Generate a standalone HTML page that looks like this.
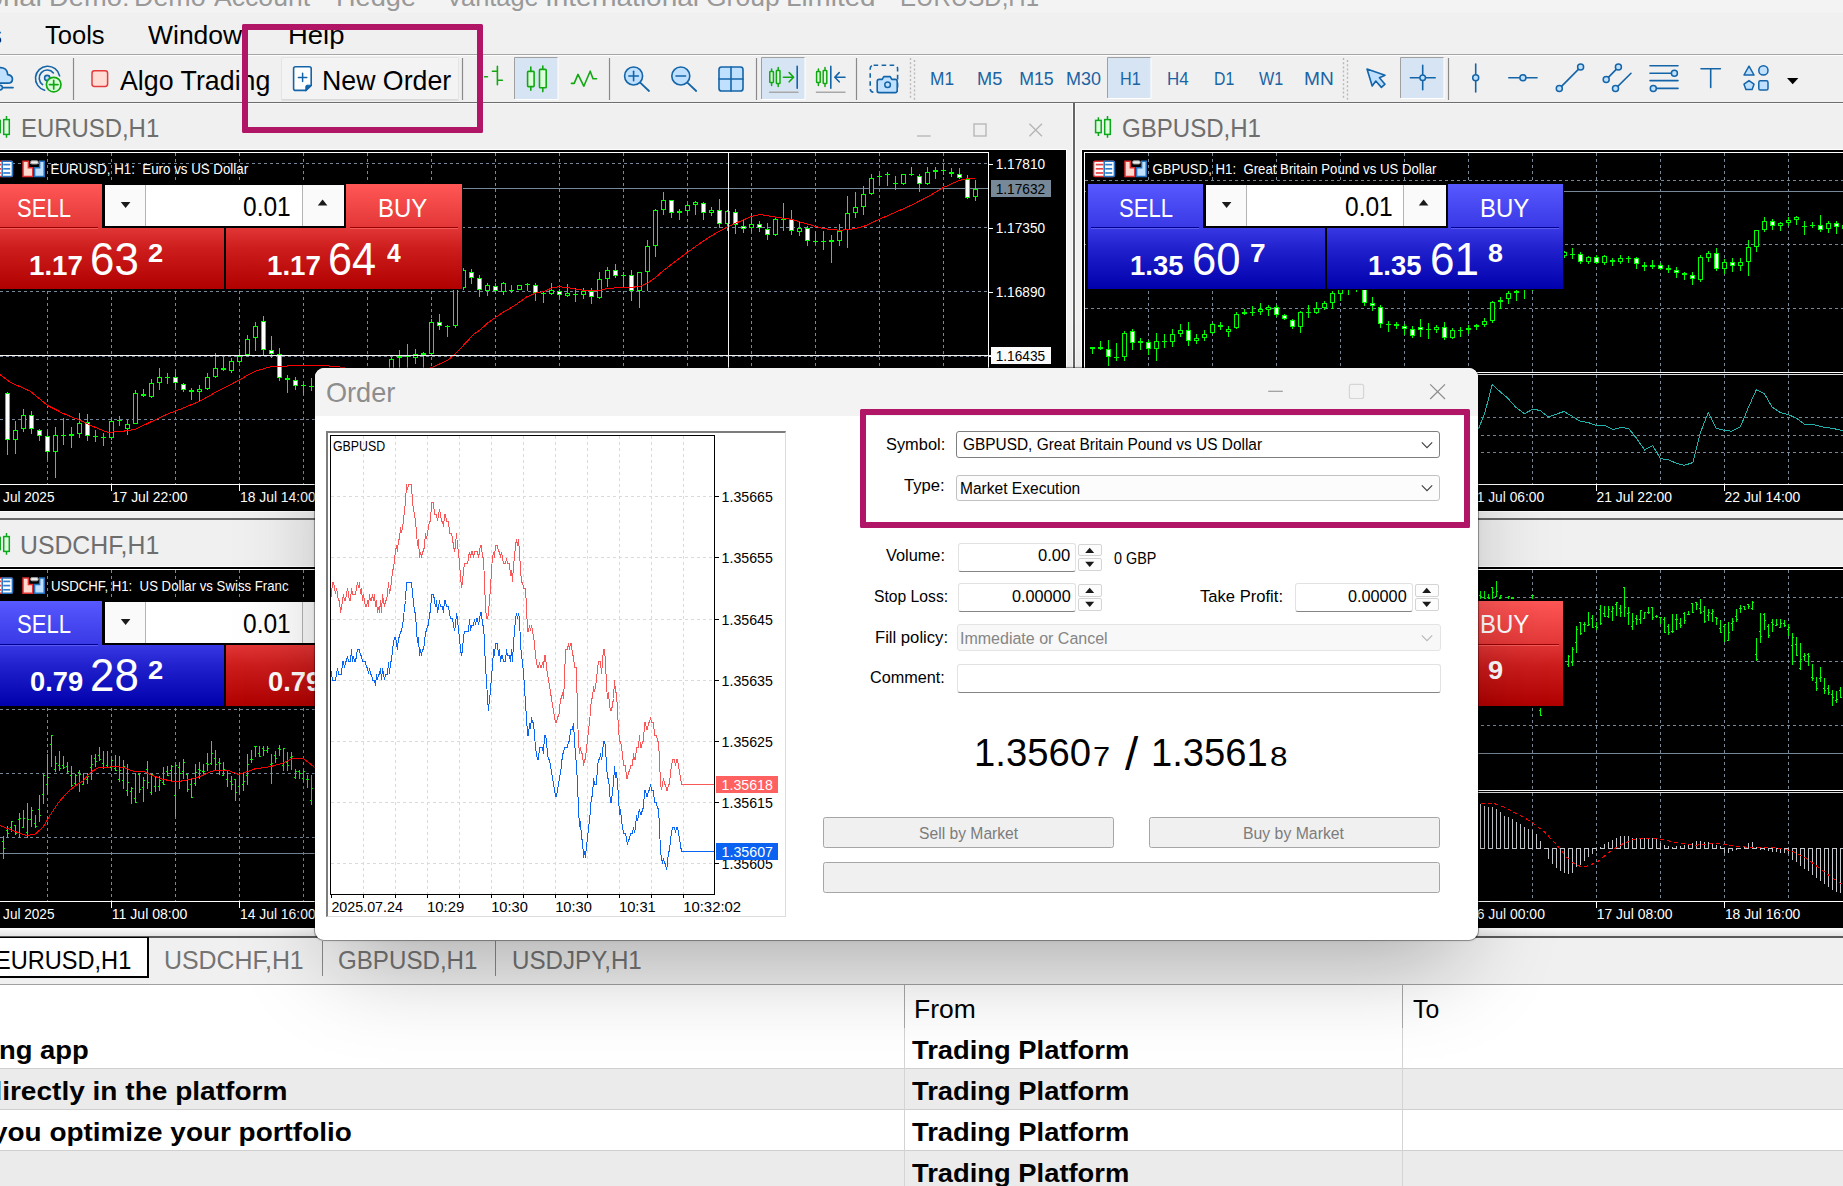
<!DOCTYPE html><html lang="en"><head><meta charset="utf-8"><title>Order - GBPUSD</title><style>
html,body{margin:0;padding:0;overflow:hidden;background:#f0f0f0}
body{width:1843px;height:1186px;position:relative}
.screen{position:absolute;left:0;top:0;width:1843px;height:1186px;overflow:hidden;background:#f0f0f0;font-family:"Liberation Sans",sans-serif;color:#000}
.t{position:absolute;white-space:pre;transform-origin:0 0;display:block}
.chart{position:absolute;display:block;overflow:hidden}
.chart text{font-family:"Liberation Sans",sans-serif}
div{box-sizing:border-box}
.abs{position:absolute}
.hl{position:absolute;border:6px solid #b11565;border-radius:1.5px;box-sizing:border-box}
</style></head><body><div class="screen"><header><div style="position:absolute;left:0px;top:0px;width:1843px;height:13px;background:#f3f3f3"></div><div class="abs" style="left:0;top:0;width:1843px;height:13px"><span class="t" style="left:-10.84px;top:-16.00px;font-size:26.40px;line-height:26.40px;color:#999;transform:scaleX(0.9299);">o</span><span class="t" style="left:2.63px;top:-16.00px;font-size:26.40px;line-height:26.40px;color:#999;transform:scaleX(1.1048);">nal</span><span class="t" style="left:48.54px;top:-16.00px;font-size:26.40px;line-height:26.40px;color:#999;transform:scaleX(1.0356);">Demo:</span><span class="t" style="left:133.98px;top:-16.00px;font-size:26.40px;line-height:26.40px;color:#999;transform:scaleX(1.0180);">Demo</span><span class="t" style="left:214.23px;top:-16.00px;font-size:26.40px;line-height:26.40px;color:#999;transform:scaleX(1.0083);">Account</span><span class="t" style="left:319.55px;top:-16.00px;font-size:26.40px;line-height:26.40px;color:#999;transform:scaleX(1.0513);">-</span><span class="t" style="left:335.76px;top:-16.00px;font-size:26.40px;line-height:26.40px;color:#999;transform:scaleX(1.0289);">Hedge</span><span class="t" style="left:423.55px;top:-16.00px;font-size:26.40px;line-height:26.40px;color:#999;transform:scaleX(1.0513);">-</span><span class="t" style="left:446.17px;top:-16.00px;font-size:26.40px;line-height:26.40px;color:#999;transform:scaleX(0.9610);">Vantage</span><span class="t" style="left:545.11px;top:-16.00px;font-size:26.40px;line-height:26.40px;color:#999;transform:scaleX(1.0602);">International</span><span class="t" style="left:705.68px;top:-16.00px;font-size:26.40px;line-height:26.40px;color:#999;transform:scaleX(1.0035);">Group</span><span class="t" style="left:785.81px;top:-16.00px;font-size:26.40px;line-height:26.40px;color:#999;transform:scaleX(1.0524);">Limited</span><span class="t" style="left:882.55px;top:-16.00px;font-size:26.40px;line-height:26.40px;color:#999;transform:scaleX(1.0513);">-</span><span class="t" style="left:900.11px;top:-16.00px;font-size:26.40px;line-height:26.40px;color:#999;transform:scaleX(0.9122);">EURUSD,H1</span></div><nav><span class="t" style="left:-11.33px;top:22.00px;font-size:26.40px;line-height:26.40px;color:#000;">s</span><span class="t" style="left:44.83px;top:22.00px;font-size:26.40px;line-height:26.40px;color:#000;transform:scaleX(0.9680);">Tools</span><span class="t" style="left:147.87px;top:22.00px;font-size:26.40px;line-height:26.40px;color:#000;transform:scaleX(1.0037);">Window</span><span class="t" style="left:287.63px;top:22.00px;font-size:26.40px;line-height:26.40px;color:#000;transform:scaleX(1.0408);">Help</span></nav><div style="position:absolute;left:0px;top:54px;width:1843px;height:1px;background:#a6a6a6"></div><div style="position:absolute;left:0px;top:55px;width:1843px;height:1px;background:#fdfdfd"></div><div style="position:absolute;left:0px;top:102px;width:1843px;height:1px;background:#6e6e6e"></div><div style="position:absolute;left:0px;top:103px;width:1843px;height:1px;background:#f8f8f8"></div><svg class="chart" style="left:0;top:54px" width="1843" height="50" viewBox="0 54 1843 50" fill="none" stroke-linecap="round" stroke-linejoin="round"><path d="M-6 83.2c-4 0-6-3-5.5-6 .5-3 3-4.5 5.5-4 1-4 5-6.5 9-5.2 3 1 4.6 3.6 4.6 6.6 3.4.4 5 2.6 4.8 5-.2 2.2-2 3.6-4.4 3.6z" fill="#bfe0ff" stroke="#1464a8" stroke-width="1.7"/><path d="M-2 87.6H13" stroke="#1464a8" stroke-width="1.7"/><circle cx="0" cy="87.6" r="2.4" fill="#bfe0ff" stroke="#1464a8" stroke-width="1.5"/><circle cx="47.2" cy="78" r="2.6" fill="#bfe0ff" stroke="#1464a8" stroke-width="1.6"/><path d="M42.6 84.6A8 8 0 1 1 53.4 73" stroke="#1464a8" stroke-width="1.6"/><path d="M44.6 90.2A12.2 12.2 0 1 1 59.6 75.8" stroke="#1464a8" stroke-width="1.6"/><circle cx="53.7" cy="84.6" r="7.3" fill="#dcffdc" stroke="#12a812" stroke-width="1.7"/><path d="M49.4 84.6h8.6M53.7 80.3v8.6" stroke="#12a812" stroke-width="1.7"/><path d="M73.5 58V100" stroke="#8a8a8a" stroke-width="1.2" stroke-linecap="butt"/><path d="M462.5 58V100" stroke="#8a8a8a" stroke-width="1.2" stroke-linecap="butt"/><path d="M609.5 58V100" stroke="#8a8a8a" stroke-width="1.2" stroke-linecap="butt"/><path d="M756.5 58V100" stroke="#8a8a8a" stroke-width="1.2" stroke-linecap="butt"/><path d="M856.5 58V100" stroke="#8a8a8a" stroke-width="1.2" stroke-linecap="butt"/><path d="M1448.5 58V100" stroke="#8a8a8a" stroke-width="1.2" stroke-linecap="butt"/><rect x="92" y="70.8" width="15.6" height="15.6" rx="2.4" fill="#ffdcd4" stroke="#e23c3c" stroke-width="1.5"/><rect x="281.5" y="57.5" width="177" height="42" rx="1" fill="#f3f3f3" stroke="#e4e4e4" stroke-width="1"/><path d="M282 100H458" stroke="#d0d0d0" stroke-width="1"/><path d="M295.6 66.8h13.6a2 2 0 0 1 2 2v16.6l-5.4 5h-10.2a2 2 0 0 1-2-2v-19.6a2 2 0 0 1 2-2z" fill="#fff" stroke="#1464a8" stroke-width="1.6"/><path d="M311.6 85.2h-4.4a1.4 1.4 0 0 0-1.4 1.4v4.2z" fill="#1464a8" stroke="#1464a8" stroke-width="1"/><path d="M298.4 77.4h8.4M302.6 73.2v8.4" stroke="#1464a8" stroke-width="1.5"/><path d="M497.4 66.4V84.8M492.4 71.2h5M497.4 80.2h5M484.5 76.8h3" stroke="#12a812" stroke-width="1.6"/><rect x="514.5" y="57.5" width="43.5" height="42" fill="#d6e4f4" stroke="none"/><path d="M514.5 99.5V57.5H558" stroke="#a0a0a0" stroke-width="1"/><path d="M558 57.5V99.5H514.5" stroke="#fff" stroke-width="1"/><path d="M530.8 67v4.2M530.8 86.6v3.6M542.8 66v3.2M542.8 87.8v3.8" stroke="#12a812" stroke-width="1.6"/><rect x="527.6" y="71.4" width="6.5" height="15.2" rx=".8" fill="#dcffdc" stroke="#12a812" stroke-width="1.6"/><rect x="539.5" y="69.4" width="6.7" height="18.4" rx=".8" fill="#dcffdc" stroke="#12a812" stroke-width="1.6"/><path d="M571.4 83.4h2.8l3.8-9 5.8 11.8 6.4-15 2.8 7.6h3.6" stroke="#12a812" stroke-width="1.6"/><circle cx="633.6" cy="76" r="9" fill="#bfe0ff" stroke="#1464a8" stroke-width="1.6"/><path d="M640.2 82.6L649.0 91" stroke="#1464a8" stroke-width="1.8"/><path d="M628.8000000000001 76h9.6" stroke="#1464a8" stroke-width="1.6"/><path d="M633.6 71.2v9.6" stroke="#1464a8" stroke-width="1.6"/><circle cx="680.8" cy="76" r="9" fill="#bfe0ff" stroke="#1464a8" stroke-width="1.6"/><path d="M687.4 82.6L696.1999999999999 91" stroke="#1464a8" stroke-width="1.8"/><path d="M676.0 76h9.6" stroke="#1464a8" stroke-width="1.6"/><rect x="719" y="67" width="24" height="24" rx="2.6" fill="#bfe0ff" stroke="#1464a8" stroke-width="1.6"/><path d="M731 67v24M719 79h24" stroke="#1464a8" stroke-width="1.6"/><rect x="761.5" y="57.5" width="43.5" height="42" fill="#d6e4f4"/><path d="M761.5 99.5V57.5H805" stroke="#a0a0a0" stroke-width="1"/><path d="M805 57.5V99.5H761.5" stroke="#fff" stroke-width="1"/><path d="M771.5999999999999 69v2.6M771.5999999999999 82.6v3M778.1999999999999 67.6v3M778.1999999999999 83.6v3" stroke="#12a812" stroke-width="1.5"/><rect x="769.8" y="71.6" width="3.6" height="11" rx=".6" fill="#dcffdc" stroke="#12a812" stroke-width="1.5"/><rect x="776.4" y="70.4" width="3.6" height="13.2" rx=".6" fill="#dcffdc" stroke="#12a812" stroke-width="1.5"/><path d="M783.4 77.2h10M789.2 72.6l4.4 4.6-4.4 4.6" stroke="#12a812" stroke-width="1.6"/><path d="M797.2 66.4V88.2" stroke="#1464a8" stroke-width="1.6"/><path d="M769.6 92.3H798" stroke="#a8a8a8" stroke-width="1.4"/><path d="M818.4 69v2.6M818.4 82.6v3M825.0 67.6v3M825.0 83.6v3" stroke="#12a812" stroke-width="1.5"/><rect x="816.6" y="71.6" width="3.6" height="11" rx=".6" fill="#dcffdc" stroke="#12a812" stroke-width="1.5"/><rect x="823.2" y="70.4" width="3.6" height="13.2" rx=".6" fill="#dcffdc" stroke="#12a812" stroke-width="1.5"/><path d="M830.8 66.4V88.2" stroke="#1464a8" stroke-width="1.6"/><path d="M845 77.2h-10M839.2 72.6l-4.4 4.6 4.4 4.6" stroke="#1464a8" stroke-width="1.6"/><path d="M816.4 92.3H845" stroke="#a8a8a8" stroke-width="1.4"/><rect x="870.2" y="65.2" width="27.4" height="27" rx="3.4" stroke="#1464a8" stroke-width="1.6" stroke-dasharray="4.6 3.4" stroke-linecap="butt"/><path d="M879.2 79.4h3l1.6-2.8h6.4l1.6 2.8h3.4a2 2 0 0 1 2 2v9.2a2 2 0 0 1-2 2h-16a2 2 0 0 1-2-2v-9.2a2 2 0 0 1 2-2z" fill="#bfe0ff" stroke="#1464a8" stroke-width="1.6"/><circle cx="887.6" cy="84.8" r="2.8" fill="#bfe0ff" stroke="#1464a8" stroke-width="1.5"/><path d="M910.5 58V100M914.5 60V100" stroke="#b8b8b8" stroke-width="1.4" stroke-dasharray="2 2.2" stroke-linecap="butt"/><path d="M1343.5 58V100M1347.5 60V100" stroke="#b8b8b8" stroke-width="1.4" stroke-dasharray="2 2.2" stroke-linecap="butt"/><rect x="1107.5" y="57.5" width="43.5" height="41" fill="#d6e4f4"/><path d="M1107.5 98.5V57.5H1151" stroke="#a0a0a0" stroke-width="1"/><path d="M1151 57.5V98.5H1107.5" stroke="#fff" stroke-width="1"/><path d="M1367 69l5.2 17 3.6-5 5.6 6.4 3.6-3.2-5.6-6.4 5.6-2.6z" fill="#bfe0ff" stroke="#1464a8" stroke-width="1.6"/><rect x="1400.5" y="57.5" width="43.5" height="41" fill="#d6e4f4"/><path d="M1400.5 98.5V57.5H1444" stroke="#a0a0a0" stroke-width="1"/><path d="M1444 57.5V98.5H1400.5" stroke="#fff" stroke-width="1"/><path d="M1410.4 77.7h24.8M1422.7 65.4v24.4" stroke="#1464a8" stroke-width="1.6"/><circle cx="1422.7" cy="77.7" r="2.8" fill="#bfe0ff" stroke="#1464a8" stroke-width="1.5"/><path d="M1475.7 64V92" stroke="#1464a8" stroke-width="1.6"/><circle cx="1475.7" cy="77.7" r="3" fill="#bfe0ff" stroke="#1464a8" stroke-width="1.5"/><path d="M1508.8 77.7H1537" stroke="#1464a8" stroke-width="1.6"/><circle cx="1522.9" cy="77.7" r="3" fill="#bfe0ff" stroke="#1464a8" stroke-width="1.5"/><path d="M1559.3 88.6L1580.6 67.1" stroke="#1464a8" stroke-width="1.6"/><circle cx="1559.3" cy="88.6" r="3" fill="#bfe0ff" stroke="#1464a8" stroke-width="1.5"/><circle cx="1580.6" cy="67.1" r="3" fill="#bfe0ff" stroke="#1464a8" stroke-width="1.5"/><path d="M1606.2 79.6L1618.4 67.1M1615.5 88.6L1631 73.3" stroke="#1464a8" stroke-width="1.6"/><circle cx="1606.2" cy="79.6" r="3" fill="#bfe0ff" stroke="#1464a8" stroke-width="1.5"/><circle cx="1618.4" cy="67.1" r="3" fill="#bfe0ff" stroke="#1464a8" stroke-width="1.5"/><circle cx="1615.5" cy="88.6" r="3" fill="#bfe0ff" stroke="#1464a8" stroke-width="1.5"/><path d="M1650 65.8H1678M1650 73.3H1672M1650 80.6H1678M1656 88.4H1678" stroke="#1464a8" stroke-width="1.6"/><circle cx="1674.4" cy="73.3" r="3" fill="#bfe0ff" stroke="#1464a8" stroke-width="1.5"/><circle cx="1653.3" cy="88.4" r="3" fill="#bfe0ff" stroke="#1464a8" stroke-width="1.5"/><path d="M1701 68.7H1720.4M1710.7 68.7V87.4" stroke="#1464a8" stroke-width="1.6"/><path d="M1749 66.2l5 8.8h-10z" fill="#bfe0ff" stroke="#1464a8" stroke-width="1.5"/><circle cx="1763.4" cy="70.4" r="4.6" fill="#bfe0ff" stroke="#1464a8" stroke-width="1.5"/><path d="M1749 80.6l5 3.6-1.9 5.4h-6.2l-1.9-5.4z" fill="#bfe0ff" stroke="#1464a8" stroke-width="1.5"/><rect x="1758.8" y="80.8" width="9.2" height="9.2" rx="1.6" fill="#bfe0ff" stroke="#1464a8" stroke-width="1.5"/><path d="M1787 78h11.4l-5.7 6.2z" fill="#000" stroke="none"/></svg><span class="t" style="left:120.33px;top:67.00px;font-size:27.40px;line-height:27.40px;color:#000;transform:scaleX(0.9778);">Algo Trading</span><span class="t" style="left:321.80px;top:67.00px;font-size:27.20px;line-height:27.20px;color:#000;transform:scaleX(0.9825);">New Order</span><span class="t" style="left:929.77px;top:71.00px;font-size:17.80px;line-height:17.80px;color:#1a64a4;transform:scaleX(0.9739);">M1</span><span class="t" style="left:976.50px;top:71.00px;font-size:17.80px;line-height:17.80px;color:#1a64a4;transform:scaleX(1.0215);">M5</span><span class="t" style="left:1019.13px;top:71.00px;font-size:17.80px;line-height:17.80px;color:#1a64a4;">M15</span><span class="t" style="left:1065.92px;top:71.00px;font-size:17.80px;line-height:17.80px;color:#1a64a4;transform:scaleX(1.0097);">M30</span><span class="t" style="left:1119.86px;top:71.00px;font-size:17.80px;line-height:17.80px;color:#1a64a4;transform:scaleX(0.9106);">H1</span><span class="t" style="left:1166.60px;top:71.00px;font-size:17.80px;line-height:17.80px;color:#1a64a4;transform:scaleX(0.9528);">H4</span><span class="t" style="left:1213.89px;top:71.00px;font-size:17.80px;line-height:17.80px;color:#1a64a4;transform:scaleX(0.8910);">D1</span><span class="t" style="left:1259.32px;top:71.00px;font-size:17.80px;line-height:17.80px;color:#1a64a4;transform:scaleX(0.9082);">W1</span><span class="t" style="left:1304.02px;top:71.00px;font-size:17.80px;line-height:17.80px;color:#1a64a4;transform:scaleX(1.0751);">MN</span></header><main><svg class="chart" style="left:-8px;top:115px" width="24" height="26" viewBox="-8 115 24 26" fill="#dfffdf" stroke="#0aa81a" stroke-width="1.5"><path d="M-2.6 117.2v3M-2.6 132.6v3.4M6.5 116v3.4M6.5 134.4v3.4" fill="none"/><rect x="-5.4" y="120.4" width="5.6" height="12.2"/><rect x="3.6999999999999993" y="119.6" width="5.6" height="14.8"/></svg><span class="t" style="left:21.23px;top:115.00px;font-size:26.40px;line-height:26.40px;color:#6e6e6e;transform:scaleX(0.9061);">EURUSD,H1</span><svg class="chart" style="left:910px;top:118px" width="140" height="24" viewBox="910 118 140 24" fill="none" stroke="#b4b4b4" stroke-width="1.3"><path d="M917 136h13.6"/><rect x="974" y="124" width="12" height="12"/><path d="M1029.4 123.8l12.6 12.4M1042 123.8l-12.6 12.4"/></svg><svg class="chart" style="left:1093px;top:115px" width="24" height="26" viewBox="1093 115 24 26" fill="#dfffdf" stroke="#0aa81a" stroke-width="1.5"><path d="M1098.4 117.2v3M1098.4 132.6v3.4M1107.5 116v3.4M1107.5 134.4v3.4" fill="none"/><rect x="1095.6" y="120.4" width="5.6" height="12.2"/><rect x="1104.7" y="119.6" width="5.6" height="14.8"/></svg><span class="t" style="left:1121.80px;top:115.00px;font-size:26.40px;line-height:26.40px;color:#6e6e6e;transform:scaleX(0.9110);">GBPUSD,H1</span><div style="position:absolute;left:1072px;top:103px;width:1px;height:408px;background:#fafafa"></div><div style="position:absolute;left:1073px;top:103px;width:2px;height:408px;background:#646464"></div><div style="position:absolute;left:1075px;top:103px;width:1px;height:408px;background:#fafafa"></div><div style="position:absolute;left:0px;top:149px;width:1067px;height:1px;background:#fff"></div><div style="position:absolute;left:1081px;top:149px;width:762px;height:1px;background:#fff"></div><div style="position:absolute;left:1066px;top:149px;width:1px;height:362px;background:#fff"></div><div style="position:absolute;left:1081px;top:149px;width:1px;height:362px;background:#fff"></div><div style="position:absolute;left:0px;top:511px;width:1843px;height:1px;background:#fbfbfb"></div><div style="position:absolute;left:0px;top:518px;width:1843px;height:2px;background:#6a6a6a"></div><svg class="chart" style="left:-8.5px;top:532.4px" width="24" height="26" viewBox="-8.5 532.4 24 26" fill="#dfffdf" stroke="#0aa81a" stroke-width="1.5"><path d="M-3.1 534.6v3M-3.1 550.0v3.4M6.0 533.4v3.4M6.0 551.8v3.4" fill="none"/><rect x="-5.9" y="537.8" width="5.6" height="12.2"/><rect x="3.1999999999999993" y="537.0" width="5.6" height="14.8"/></svg><span class="t" style="left:20.48px;top:532.00px;font-size:26.40px;line-height:26.40px;color:#6e6e6e;transform:scaleX(0.9399);">USDCHF,H1</span><div style="position:absolute;left:0px;top:566px;width:1843px;height:1px;background:#fff"></div><svg class="chart" style="left:0px;top:150px" width="1066" height="361" viewBox="0 150 1066 361" shape-rendering="crispEdges" ><rect x="0" y="150" width="1066" height="361" fill="#000"/><path d="M47.5 153V484M111.5 153V484M175.5 153V484M239.5 153V484M303.5 153V484M367.5 153V484M431.5 153V484M495.5 153V484M559.5 153V484M623.5 153V484M687.5 153V484M751.5 153V484M815.5 153V484M879.5 153V484M943.5 153V484M0 163.5H988M0 227.5H988M0 291.5H988M0 356.5H988M0 419.5H988" stroke="#778899" stroke-width="1" stroke-dasharray="3 3" fill="none"/><path d="M0 188.5H988" stroke="#778899" stroke-width="1"/><path d="M7 392h1v63h-1zM15 421h1v33h-1zM23 409h1v23h-1zM31 411h1v23h-1zM39 429h1v12h-1zM47 431h1v29h-1zM55 427h1v51h-1zM63 418h1v27h-1zM71 427h1v21h-1zM79 413h1v25h-1zM87 414h1v27h-1zM95 430h1v12h-1zM103 433h1v13h-1zM111 417h1v23h-1zM119 416h1v10h-1zM127 420h1v15h-1zM135 390h1v34h-1zM143 389h1v8h-1zM151 379h1v19h-1zM159 368h1v22h-1zM167 373h1v11h-1zM175 372h1v15h-1zM183 383h1v9h-1zM191 388h1v12h-1zM199 385h1v16h-1zM207 373h1v17h-1zM215 353h1v25h-1zM223 356h1v15h-1zM231 358h1v15h-1zM239 349h1v14h-1zM247 335h1v21h-1zM255 322h1v29h-1zM263 316h1v39h-1zM271 336h1v22h-1zM279 348h1v33h-1zM287 375h1v18h-1zM295 377h1v13h-1zM303 384h1v11h-1zM311 378h1v13h-1zM319 381h1v12h-1zM327 381h1v12h-1zM335 381h1v12h-1zM343 381h1v12h-1zM351 381h1v12h-1zM359 381h1v12h-1zM367 381h1v12h-1zM375 381h1v12h-1zM383 381h1v12h-1zM391 357h1v23h-1zM399 350h1v22h-1zM407 344h1v28h-1zM415 349h1v15h-1zM423 352h1v20h-1zM431 319h1v36h-1zM439 314h1v16h-1zM447 325h1v12h-1zM455 286h1v42h-1zM463 268h1v22h-1zM471 269h1v15h-1zM479 275h1v22h-1zM487 283h1v13h-1zM495 283h1v9h-1zM503 282h1v13h-1zM511 285h1v8h-1zM519 285h1v5h-1zM527 283h1v8h-1zM535 283h1v18h-1zM543 292h1v11h-1zM551 283h1v12h-1zM559 289h1v9h-1zM567 284h1v13h-1zM575 288h1v14h-1zM583 288h1v11h-1zM591 288h1v16h-1zM599 272h1v27h-1zM607 267h1v20h-1zM615 264h1v14h-1zM623 272h1v16h-1zM631 270h1v31h-1zM639 272h1v36h-1zM647 240h1v51h-1zM655 209h1v48h-1zM663 192h1v23h-1zM671 200h1v18h-1zM679 209h1v11h-1zM687 203h1v12h-1zM695 201h1v14h-1zM703 202h1v18h-1zM711 207h1v9h-1zM719 199h1v29h-1zM727 210h1v21h-1zM735 209h1v25h-1zM743 220h1v13h-1zM751 213h1v19h-1zM759 221h1v11h-1zM767 223h1v17h-1zM775 218h1v18h-1zM783 203h1v28h-1zM791 210h1v25h-1zM799 222h1v14h-1zM807 226h1v20h-1zM815 232h1v13h-1zM823 231h1v19h-1zM831 235h1v28h-1zM839 224h1v22h-1zM847 196h1v52h-1zM855 192h1v26h-1zM863 186h1v29h-1zM871 174h1v21h-1zM879 174h1v11h-1zM887 172h1v14h-1zM895 176h1v14h-1zM903 174h1v11h-1zM911 167h1v9h-1zM919 174h1v18h-1zM927 167h1v18h-1zM935 167h1v12h-1zM943 164h1v11h-1zM951 168h1v9h-1zM959 168h1v11h-1zM967 175h1v24h-1zM975 180h1v21h-1zM5 393h5v47h-5zM13 430h5v10h-5zM21 415h5v14h-5zM29 415h5v14h-5zM37 430h5v6h-5zM45 436h5v16h-5zM53 435h5v17h-5zM61 435h5v1h-5zM69 434h5v2h-5zM77 423h5v11h-5zM85 422h5v14h-5zM93 436h5v1h-5zM101 437h5v1h-5zM109 421h5v17h-5zM117 420h5v1h-5zM125 424h5v5h-5zM133 393h5v31h-5zM141 394h5v2h-5zM149 383h5v14h-5zM157 377h5v6h-5zM165 377h5v1h-5zM173 377h5v6h-5zM181 384h5v6h-5zM189 390h5v2h-5zM197 389h5v3h-5zM205 377h5v12h-5zM213 368h5v9h-5zM221 368h5v2h-5zM229 361h5v10h-5zM237 356h5v6h-5zM245 339h5v16h-5zM253 326h5v12h-5zM261 321h5v29h-5zM269 350h5v4h-5zM277 354h5v24h-5zM285 378h5v2h-5zM293 380h5v6h-5zM301 385h5v1h-5zM309 386h5v1h-5zM317 384h5v5h-5zM325 384h5v5h-5zM333 384h5v5h-5zM341 384h5v5h-5zM349 384h5v5h-5zM357 384h5v5h-5zM365 384h5v5h-5zM373 384h5v5h-5zM381 384h5v5h-5zM389 359h5v19h-5zM397 356h5v2h-5zM405 356h5v1h-5zM413 354h5v4h-5zM421 353h5v2h-5zM429 322h5v32h-5zM437 322h5v4h-5zM445 326h5v1h-5zM453 288h5v38h-5zM461 270h5v18h-5zM469 272h5v6h-5zM477 278h5v12h-5zM485 285h5v6h-5zM493 286h5v5h-5zM501 283h5v9h-5zM509 290h5v1h-5zM517 285h5v5h-5zM525 284h5v1h-5zM533 285h5v8h-5zM541 293h5v1h-5zM549 290h5v4h-5zM557 291h5v4h-5zM565 293h5v3h-5zM573 294h5v1h-5zM581 291h5v4h-5zM589 291h5v6h-5zM597 279h5v19h-5zM605 270h5v9h-5zM613 270h5v6h-5zM621 275h5v1h-5zM629 275h5v16h-5zM637 272h5v19h-5zM645 246h5v26h-5zM653 210h5v36h-5zM661 200h5v10h-5zM669 200h5v13h-5zM677 211h5v2h-5zM685 205h5v6h-5zM693 202h5v3h-5zM701 203h5v10h-5zM709 210h5v3h-5zM717 210h5v14h-5zM725 211h5v13h-5zM733 212h5v13h-5zM741 226h5v3h-5zM749 224h5v4h-5zM757 224h5v4h-5zM765 229h5v6h-5zM773 219h5v16h-5zM781 219h5v1h-5zM789 219h5v12h-5zM797 228h5v4h-5zM805 228h5v13h-5zM813 241h5v1h-5zM821 241h5v1h-5zM829 240h5v2h-5zM837 231h5v10h-5zM845 213h5v17h-5zM853 207h5v6h-5zM861 194h5v13h-5zM869 178h5v16h-5zM877 176h5v1h-5zM885 174h5v1h-5zM893 183h5v1h-5zM901 174h5v10h-5zM909 174h5v1h-5zM917 176h5v8h-5zM925 172h5v12h-5zM933 170h5v2h-5zM941 170h5v1h-5zM949 172h5v2h-5zM957 174h5v4h-5zM965 179h5v19h-5zM973 189h5v8h-5z" fill="#00ff00"/><path d="M14 431h3v8h-3zM22 416h3v12h-3zM54 436h3v15h-3zM78 424h3v9h-3zM110 422h3v15h-3zM126 425h3v3h-3zM134 394h3v29h-3zM150 384h3v12h-3zM158 378h3v4h-3zM198 390h3v1h-3zM206 378h3v10h-3zM214 369h3v7h-3zM230 362h3v8h-3zM238 357h3v4h-3zM246 340h3v14h-3zM254 327h3v10h-3zM318 385h3v3h-3zM326 385h3v3h-3zM334 385h3v3h-3zM342 385h3v3h-3zM350 385h3v3h-3zM358 385h3v3h-3zM366 385h3v3h-3zM374 385h3v3h-3zM382 385h3v3h-3zM390 360h3v17h-3zM414 355h3v2h-3zM430 323h3v30h-3zM454 289h3v36h-3zM462 271h3v16h-3zM486 286h3v4h-3zM502 284h3v7h-3zM518 286h3v3h-3zM550 291h3v2h-3zM566 294h3v1h-3zM582 292h3v2h-3zM598 280h3v17h-3zM606 271h3v7h-3zM638 273h3v17h-3zM646 247h3v24h-3zM654 211h3v34h-3zM662 201h3v8h-3zM686 206h3v4h-3zM694 203h3v1h-3zM710 211h3v1h-3zM726 212h3v11h-3zM750 225h3v2h-3zM774 220h3v14h-3zM798 229h3v2h-3zM838 232h3v8h-3zM846 214h3v15h-3zM854 208h3v4h-3zM862 195h3v11h-3zM870 179h3v14h-3zM902 175h3v8h-3zM926 173h3v10h-3zM974 190h3v6h-3z" fill="#000"/><path d="M6 394h3v45h-3zM30 416h3v12h-3zM38 431h3v4h-3zM46 437h3v14h-3zM86 423h3v12h-3zM174 378h3v4h-3zM182 385h3v4h-3zM262 322h3v27h-3zM270 351h3v2h-3zM278 355h3v22h-3zM294 381h3v4h-3zM438 323h3v2h-3zM470 273h3v4h-3zM478 279h3v10h-3zM494 287h3v3h-3zM534 286h3v6h-3zM558 292h3v2h-3zM590 292h3v4h-3zM614 271h3v4h-3zM630 276h3v14h-3zM670 201h3v11h-3zM702 204h3v8h-3zM718 211h3v12h-3zM734 213h3v11h-3zM742 227h3v1h-3zM758 225h3v2h-3zM766 230h3v4h-3zM790 220h3v10h-3zM806 229h3v11h-3zM918 177h3v6h-3zM958 175h3v2h-3zM966 180h3v17h-3z" fill="#fff"/><g shape-rendering="crispEdges"><polyline points="0,374.7 10.1,382.2 30.4,391.3 47.6,405.5 63.3,413.5 79.3,420 95.1,427.3 107.2,432.2 119.4,431.8 135.4,429.3 151.4,421.6 167.3,414.2 183.5,407.9 199.5,401.4 215.5,392.3 231.5,384.2 239.4,379.8 255.4,371.1 271.3,366.6 287.3,366 303.5,365.4 312,365.4" fill="none" stroke="#ff0000" stroke-width="1" /><polyline points="300,365.4 324,365.6 340,367 380,375 410,374 432,367.5 447,360.5 452,357 460,349 474,334 480,330 488.2,322.5 503.1,312.3 514.2,305.8 527.2,296.6 535.5,293.2 543.9,291.4 551.3,288.2 558.7,286.7 568,287.7 575.4,289.1 584.7,290.4 599.6,290.4 608.8,288.2 623.7,287.7 639.4,286.7 647.4,283.2 655.4,277.6 663.4,270.6 679.5,258.2 695.5,246.5 711.4,235.7 727.4,227 735.4,223.3 751.7,216.4 759.5,214.6 760,214.5 774.2,216.9 790.7,219.2 807.2,224 823.8,228.7 840.3,230.3 854.5,228.7 863.9,226.3 879.5,219.2 895.5,212.2 911.6,205.1 927.7,196.8 943.5,187.4 959.5,180.3 967.8,178.6 974.9,178.4" fill="none" stroke="#ff0000" stroke-width="1" /></g><path d="M0 355.5H992" stroke="#f4f4f4" stroke-width="1"/><path d="M728.5 153V484" stroke="#f4f4f4" stroke-width="1"/><path d="M0 152.5H989" stroke="#fff" stroke-width="1"/><path d="M988.5 152V511" stroke="#fff" stroke-width="1"/><path d="M0 484.5H989" stroke="#fff" stroke-width="1"/><path d="M989 164.5h4M989 228.5h4M989 292.5h4M989 356.5h4M989 420.5h4M111.5 485v6M239.5 485v6M367.5 485v6M495.5 485v6M623.5 485v6M751.5 485v6M879.5 485v6" stroke="#fff" stroke-width="1"/><rect x="991" y="180" width="60" height="17" fill="#778899"/><rect x="991" y="347" width="60" height="17" fill="#fff"/><g shape-rendering="auto"><text x="995.7" y="169.2" fill="#fff" font-size="14.2" textLength="49.4" lengthAdjust="spacingAndGlyphs" xml:space="preserve">1.17810</text><text x="995.7" y="233.2" fill="#fff" font-size="14.2" textLength="49.4" lengthAdjust="spacingAndGlyphs" xml:space="preserve">1.17350</text><text x="995.7" y="297.2" fill="#fff" font-size="14.2" textLength="49.4" lengthAdjust="spacingAndGlyphs" xml:space="preserve">1.16890</text><text x="995.7" y="194" fill="#000" font-size="14.2" textLength="49.5" lengthAdjust="spacingAndGlyphs" xml:space="preserve">1.17632</text><text x="995.7" y="361" fill="#000" font-size="14.2" textLength="49.4" lengthAdjust="spacingAndGlyphs" xml:space="preserve">1.16435</text><text x="3.1" y="502" fill="#fff" font-size="14.2" textLength="51.4" lengthAdjust="spacingAndGlyphs" xml:space="preserve">Jul 2025</text><text x="111.9" y="502" fill="#fff" font-size="14.2" textLength="75.6" lengthAdjust="spacingAndGlyphs" xml:space="preserve">17 Jul 22:00</text><text x="239.9" y="502" fill="#fff" font-size="14.2" textLength="75.8" lengthAdjust="spacingAndGlyphs" xml:space="preserve">18 Jul 14:00</text><text x="50.6" y="174.2" fill="#fff" font-size="14.2" textLength="197.5" lengthAdjust="spacingAndGlyphs" xml:space="preserve">EURUSD, H1:  Euro vs US Dollar</text><g shape-rendering="auto"><rect x="-8.4" y="161.20000000000002" width="20.8" height="15.2" rx="1.5" fill="#fff" stroke="#e03030" stroke-width="1.5"/><path d="M2.1999999999999993 161.20000000000002h9.2a1 1 0 0 1 1 1v13.2a1 1 0 0 1-1 1h-9.2z" fill="#fff" stroke="#2272c0" stroke-width="1.5"/><path d="M-6.2 164.60000000000002h7.4" stroke="#e84040" stroke-width="1.7"/><path d="M3.1999999999999993 164.60000000000002h7" stroke="#2f7fd0" stroke-width="1.7"/><path d="M-6.2 168.8h7.4" stroke="#e84040" stroke-width="1.7"/><path d="M3.1999999999999993 168.8h7" stroke="#2f7fd0" stroke-width="1.7"/><path d="M-6.2 173.00000000000003h7.4" stroke="#e84040" stroke-width="1.7"/><path d="M3.1999999999999993 173.00000000000003h7" stroke="#2f7fd0" stroke-width="1.7"/><path d="M23.0 161.20000000000002h5.4v6.6h4.4v8.6h-9.8z" fill="#ffd8d0" stroke="#e03030" stroke-width="1.5"/><path d="M34.6 176.4v-8.6h5v-6.6h4.6v15.2z" fill="#bfe0ff" stroke="#2272c0" stroke-width="1.5"/><rect x="30.6" y="160.8" width="7.6" height="3.2" rx="1.4" fill="#eee" stroke="#9a9a9a" stroke-width="1"/></g></g></svg><div class="abs" style="left:-13px;top:183.4px;width:475px;height:106px"><div class="abs" style="left:-2px;top:0;width:478px;height:106.6px;background:#000"></div><div class="abs" style="left:0px;top:1px;width:114.6px;height:43.6px;background:linear-gradient(#ff5656 0%,#e63a3a 38%,#cc1c1c 62%,#b00000 100%);background-size:100% 104.6px;background-position:0 0px;background-repeat:no-repeat"></div><div class="abs" style="left:0px;top:44.6px;width:236.6px;height:60.99999999999999px;background:linear-gradient(#ff5656 0%,#e63a3a 38%,#cc1c1c 62%,#b00000 100%);background-size:100% 104.6px;background-position:0 -43.6px;background-repeat:no-repeat"></div><div class="abs" style="left:359.4px;top:1px;width:115.6px;height:43.6px;background:linear-gradient(#ff5656 0%,#e63a3a 38%,#cc1c1c 62%,#b00000 100%);background-size:100% 104.6px;background-position:0 0px;background-repeat:no-repeat"></div><div class="abs" style="left:238.8px;top:44.6px;width:236.2px;height:60.99999999999999px;background:linear-gradient(#ff5656 0%,#e63a3a 38%,#cc1c1c 62%,#b00000 100%);background-size:100% 104.6px;background-position:0 -43.6px;background-repeat:no-repeat"></div><div class="abs" style="left:3px;top:43.6px;width:108px;height:1px;background:#9a0000"></div><div class="abs" style="left:3px;top:44.6px;width:108px;height:1px;background:#ff7a7a;opacity:.55"></div><div class="abs" style="left:363px;top:43.6px;width:108px;height:1px;background:#9a0000"></div><div class="abs" style="left:363px;top:44.6px;width:108px;height:1px;background:#ff7a7a;opacity:.55"></div><div class="abs" style="left:117.6px;top:1.4px;width:239.6px;height:41.2px;background:#fff"></div><div class="abs" style="left:117.6px;top:1.4px;width:41.2px;height:41.2px;background:#fafafa;border-right:1px solid #b4b4b4"></div><div class="abs" style="left:314.6px;top:1.4px;width:42.6px;height:41.2px;background:#fafafa;border-left:1px solid #b4b4b4"></div><svg class="chart" style="left:117px;top:1px" width="241" height="41" viewBox="117 0 241 41"><path d="M133.8 18h9.6l-4.8 6z" fill="#1a1a1a"/><path d="M330.8 21.6h9.6l-4.8-6z" fill="#1a1a1a"/></svg></div><span class="t" style="left:17.41px;top:195.00px;font-size:26.60px;line-height:26.60px;color:#fff;transform:scaleX(0.8289);">SELL</span><span class="t" style="left:378.42px;top:195.00px;font-size:26.60px;line-height:26.60px;color:#fff;transform:scaleX(0.9011);">BUY</span><span class="t" style="left:243.42px;top:193.00px;font-size:27.20px;line-height:27.20px;color:#000;transform:scaleX(0.9025);">0.01</span><span class="t" style="left:28.87px;top:252.00px;font-size:27.60px;line-height:27.60px;color:#fff;font-weight:700;transform:scaleX(1.0043);">1.17</span><span class="t" style="left:90.21px;top:236.00px;font-size:46.50px;line-height:46.50px;color:#fff;transform:scaleX(0.9426);">63</span><span class="t" style="left:148.44px;top:240.00px;font-size:26.50px;line-height:26.50px;color:#fff;font-weight:700;transform:scaleX(1.0324);">2</span><span class="t" style="left:266.87px;top:252.00px;font-size:27.60px;line-height:27.60px;color:#fff;font-weight:700;transform:scaleX(1.0043);">1.17</span><span class="t" style="left:328.24px;top:236.00px;font-size:46.50px;line-height:46.50px;color:#fff;transform:scaleX(0.9289);">64</span><span class="t" style="left:387.03px;top:240.00px;font-size:26.50px;line-height:26.50px;color:#fff;font-weight:700;transform:scaleX(0.9311);">4</span><svg class="chart" style="left:1082px;top:150px" width="761" height="361" viewBox="1082 150 761 361" shape-rendering="crispEdges" ><rect x="1082" y="150" width="761" height="361" fill="#000"/><path d="M1148.5 153V372M1212.5 153V372M1276.5 153V372M1340.5 153V372M1404.5 153V372M1468.5 153V372M1532.5 153V372M1596.5 153V372M1660.5 153V372M1724.5 153V372M1788.5 153V372M1085 180.5H1843M1085 244.5H1843M1085 308.5H1843" stroke="#778899" stroke-width="1" stroke-dasharray="3 3" fill="none"/><path d="M1148.5 375V484M1212.5 375V484M1276.5 375V484M1340.5 375V484M1404.5 375V484M1468.5 375V484M1532.5 375V484M1596.5 375V484M1660.5 375V484M1724.5 375V484M1788.5 375V484M1085 417.5H1843M1085 435.5H1843M1085 452.5H1843" stroke="#778899" stroke-width="1" stroke-dasharray="3 3" fill="none"/><path d="M1085 191.5H1843" stroke="#778899" stroke-width="1"/><path d="M1092 347h1v7h-1zM1100 341h1v9h-1zM1108 340h1v26h-1zM1116 343h1v18h-1zM1124 331h1v30h-1zM1132 329h1v21h-1zM1140 338h1v12h-1zM1148 340h1v15h-1zM1156 333h1v28h-1zM1164 334h1v14h-1zM1172 329h1v18h-1zM1180 324h1v13h-1zM1188 322h1v24h-1zM1196 334h1v10h-1zM1204 330h1v11h-1zM1212 323h1v11h-1zM1220 322h1v8h-1zM1228 326h1v11h-1zM1236 312h1v17h-1zM1244 309h1v6h-1zM1252 306h1v10h-1zM1260 303h1v12h-1zM1268 305h1v11h-1zM1276 305h1v12h-1zM1284 314h1v6h-1zM1292 319h1v10h-1zM1300 311h1v22h-1zM1308 305h1v13h-1zM1316 302h1v12h-1zM1324 301h1v9h-1zM1332 291h1v18h-1zM1340 288h1v13h-1zM1348 286h1v9h-1zM1356 285h1v7h-1zM1364 286h1v20h-1zM1372 297h1v14h-1zM1380 305h1v23h-1zM1388 321h1v11h-1zM1396 322h1v7h-1zM1404 324h1v11h-1zM1412 326h1v12h-1zM1420 319h1v18h-1zM1428 323h1v16h-1zM1436 325h1v8h-1zM1444 322h1v18h-1zM1452 328h1v11h-1zM1460 327h1v10h-1zM1468 325h1v9h-1zM1476 324h1v6h-1zM1484 318h1v9h-1zM1492 301h1v22h-1zM1500 297h1v12h-1zM1508 291h1v13h-1zM1516 289h1v12h-1zM1524 288h1v11h-1zM1532 282h1v9h-1zM1540 275h1v11h-1zM1548 263h1v16h-1zM1556 253h1v14h-1zM1564 251h1v7h-1zM1572 248h1v11h-1zM1580 252h1v12h-1zM1588 256h1v8h-1zM1596 255h1v9h-1zM1604 255h1v10h-1zM1612 258h1v8h-1zM1620 255h1v9h-1zM1628 256h1v7h-1zM1636 257h1v12h-1zM1644 262h1v9h-1zM1652 260h1v9h-1zM1660 263h1v7h-1zM1668 265h1v8h-1zM1676 267h1v11h-1zM1684 272h1v8h-1zM1692 272h1v13h-1zM1700 255h1v27h-1zM1708 251h1v11h-1zM1716 248h1v23h-1zM1724 259h1v15h-1zM1732 258h1v14h-1zM1740 258h1v13h-1zM1748 240h1v36h-1zM1756 230h1v22h-1zM1764 217h1v15h-1zM1772 219h1v11h-1zM1780 222h1v9h-1zM1788 217h1v9h-1zM1796 216h1v9h-1zM1804 221h1v14h-1zM1812 222h1v6h-1zM1820 215h1v17h-1zM1828 221h1v12h-1zM1836 221h1v13h-1zM1844 223h1v10h-1zM1090 347h5v2h-5zM1098 347h5v2h-5zM1106 349h5v8h-5zM1114 357h5v1h-5zM1122 333h5v24h-5zM1130 331h5v12h-5zM1138 341h5v2h-5zM1146 342h5v7h-5zM1154 341h5v8h-5zM1162 341h5v1h-5zM1170 334h5v8h-5zM1178 330h5v4h-5zM1186 330h5v11h-5zM1194 338h5v3h-5zM1202 334h5v4h-5zM1210 324h5v9h-5zM1218 325h5v2h-5zM1226 329h5v3h-5zM1234 314h5v14h-5zM1242 312h5v2h-5zM1250 312h5v1h-5zM1258 309h5v3h-5zM1266 307h5v3h-5zM1274 307h5v8h-5zM1282 315h5v4h-5zM1290 320h5v7h-5zM1298 312h5v15h-5zM1306 312h5v1h-5zM1314 308h5v5h-5zM1322 303h5v5h-5zM1330 293h5v10h-5zM1338 289h5v5h-5zM1346 288h5v2h-5zM1354 286h5v1h-5zM1362 289h5v14h-5zM1370 303h5v3h-5zM1378 307h5v17h-5zM1386 324h5v1h-5zM1394 324h5v2h-5zM1402 326h5v3h-5zM1410 329h5v7h-5zM1418 327h5v3h-5zM1426 329h5v1h-5zM1434 327h5v3h-5zM1442 327h5v11h-5zM1450 330h5v8h-5zM1458 330h5v1h-5zM1466 328h5v2h-5zM1474 325h5v2h-5zM1482 321h5v4h-5zM1490 302h5v19h-5zM1498 300h5v2h-5zM1506 293h5v6h-5zM1514 291h5v2h-5zM1522 289h5v1h-5zM1530 284h5v5h-5zM1538 277h5v7h-5zM1546 265h5v12h-5zM1554 256h5v9h-5zM1562 252h5v4h-5zM1570 254h5v1h-5zM1578 254h5v8h-5zM1586 257h5v5h-5zM1594 257h5v6h-5zM1602 256h5v7h-5zM1610 260h5v2h-5zM1618 258h5v4h-5zM1626 258h5v1h-5zM1634 258h5v6h-5zM1642 265h5v2h-5zM1650 265h5v2h-5zM1658 265h5v4h-5zM1666 268h5v2h-5zM1674 270h5v3h-5zM1682 273h5v2h-5zM1690 275h5v4h-5zM1698 257h5v23h-5zM1706 253h5v5h-5zM1714 253h5v16h-5zM1722 262h5v7h-5zM1730 262h5v4h-5zM1738 262h5v4h-5zM1746 247h5v15h-5zM1754 230h5v17h-5zM1762 221h5v9h-5zM1770 221h5v5h-5zM1778 223h5v3h-5zM1786 220h5v3h-5zM1794 217h5v3h-5zM1802 226h5v1h-5zM1810 225h5v1h-5zM1818 225h5v5h-5zM1826 223h5v6h-5zM1834 223h5v4h-5zM1842 225h5v4h-5z" fill="#00ff00"/><path d="M1123 334h3v22h-3zM1155 342h3v6h-3zM1171 335h3v6h-3zM1179 331h3v2h-3zM1195 339h3v1h-3zM1203 335h3v2h-3zM1211 325h3v7h-3zM1227 330h3v1h-3zM1235 315h3v12h-3zM1259 310h3v1h-3zM1267 308h3v1h-3zM1299 313h3v13h-3zM1315 309h3v3h-3zM1323 304h3v3h-3zM1331 294h3v8h-3zM1339 290h3v3h-3zM1435 328h3v1h-3zM1451 331h3v6h-3zM1483 322h3v2h-3zM1491 303h3v17h-3zM1507 294h3v4h-3zM1531 285h3v3h-3zM1539 278h3v5h-3zM1547 266h3v10h-3zM1555 257h3v7h-3zM1563 253h3v2h-3zM1587 258h3v3h-3zM1603 257h3v5h-3zM1619 259h3v2h-3zM1699 258h3v21h-3zM1707 254h3v3h-3zM1723 263h3v5h-3zM1739 263h3v2h-3zM1747 248h3v13h-3zM1755 231h3v15h-3zM1763 222h3v7h-3zM1779 224h3v1h-3zM1787 221h3v1h-3zM1795 218h3v1h-3zM1827 224h3v4h-3zM1843 226h3v2h-3z" fill="#000"/><path d="M1107 350h3v6h-3zM1131 332h3v10h-3zM1147 343h3v5h-3zM1187 331h3v9h-3zM1275 308h3v6h-3zM1283 316h3v2h-3zM1291 321h3v5h-3zM1363 290h3v12h-3zM1371 304h3v1h-3zM1379 308h3v15h-3zM1403 327h3v1h-3zM1411 330h3v5h-3zM1419 328h3v1h-3zM1443 328h3v9h-3zM1579 255h3v6h-3zM1595 258h3v4h-3zM1635 259h3v4h-3zM1659 266h3v2h-3zM1675 271h3v1h-3zM1691 276h3v2h-3zM1715 254h3v14h-3zM1731 263h3v2h-3zM1771 222h3v3h-3zM1819 226h3v3h-3zM1835 224h3v2h-3z" fill="#fff"/><g shape-rendering="crispEdges"><polyline points="1478.4,429.1 1484.9,412.6 1492.2,384.6 1500.3,391.8 1508,398.4 1515.6,407.1 1524.4,413.7 1532.7,409.3 1540.2,410.4 1548.1,417 1556.2,414.2 1563.9,411.5 1571.6,415.9 1580.3,421.4 1588,422.5 1596.3,425.4 1605.1,425.4 1613.2,429.5 1620.5,427.5 1628.6,428.4 1636.2,437.9 1644.6,449.9 1652.7,445.5 1660.4,458.7 1668.7,459.8 1676.8,463.5 1684.5,465.3 1692.8,462.6 1700.5,432.4 1708.2,412.6 1716.3,428.4 1724,430.2 1731.6,431.3 1740.4,426.9 1748.1,408.2 1756.4,389.6 1764.5,394 1772.2,407.1 1780.5,412.6 1788.7,414.8 1796.3,418.1 1804.7,424.3 1813.9,424.7 1822.6,426.9 1833.6,428.6 1843,430.6" fill="none" stroke="#20b2aa" stroke-width="1" /></g><path d="M1084 152.5H1843" stroke="#fff" stroke-width="1"/><path d="M1084.5 152V485" stroke="#fff" stroke-width="1"/><path d="M1084 484.5H1843" stroke="#fff" stroke-width="1"/><path d="M1084 372.5H1843" stroke="#fff" stroke-width="1"/><path d="M1084 374.5H1843" stroke="#e0e0e0" stroke-width="1"/><path d="M1212.5 485v6M1340.5 485v6M1468.5 485v6M1596.5 485v6M1724.5 485v6" stroke="#fff" stroke-width="1"/><g shape-rendering="auto"><text x="1469" y="502" fill="#fff" font-size="14.2" textLength="75.2" lengthAdjust="spacingAndGlyphs" xml:space="preserve">21 Jul 06:00</text><text x="1596.6" y="502" fill="#fff" font-size="14.2" textLength="75.4" lengthAdjust="spacingAndGlyphs" xml:space="preserve">21 Jul 22:00</text><text x="1724.6" y="502" fill="#fff" font-size="14.2" textLength="75.6" lengthAdjust="spacingAndGlyphs" xml:space="preserve">22 Jul 14:00</text><text x="1152.4" y="174.4" fill="#fff" font-size="14.2" textLength="284.1" lengthAdjust="spacingAndGlyphs" xml:space="preserve">GBPUSD, H1:  Great Britain Pound vs US Dollar</text><g shape-rendering="auto"><rect x="1093.6" y="161.20000000000002" width="20.8" height="15.2" rx="1.5" fill="#fff" stroke="#e03030" stroke-width="1.5"/><path d="M1104.1999999999998 161.20000000000002h9.2a1 1 0 0 1 1 1v13.2a1 1 0 0 1-1 1h-9.2z" fill="#fff" stroke="#2272c0" stroke-width="1.5"/><path d="M1095.8 164.60000000000002h7.4" stroke="#e84040" stroke-width="1.7"/><path d="M1105.1999999999998 164.60000000000002h7" stroke="#2f7fd0" stroke-width="1.7"/><path d="M1095.8 168.8h7.4" stroke="#e84040" stroke-width="1.7"/><path d="M1105.1999999999998 168.8h7" stroke="#2f7fd0" stroke-width="1.7"/><path d="M1095.8 173.00000000000003h7.4" stroke="#e84040" stroke-width="1.7"/><path d="M1105.1999999999998 173.00000000000003h7" stroke="#2f7fd0" stroke-width="1.7"/><path d="M1125.0 161.20000000000002h5.4v6.6h4.4v8.6h-9.8z" fill="#ffd8d0" stroke="#e03030" stroke-width="1.5"/><path d="M1136.6 176.4v-8.6h5v-6.6h4.6v15.2z" fill="#bfe0ff" stroke="#2272c0" stroke-width="1.5"/><rect x="1132.6" y="160.8" width="7.6" height="3.2" rx="1.4" fill="#eee" stroke="#9a9a9a" stroke-width="1"/></g></g></svg><div class="abs" style="left:1088.4px;top:183.4px;width:475px;height:106px"><div class="abs" style="left:-2px;top:0;width:478px;height:106.6px;background:#000"></div><div class="abs" style="left:0px;top:1px;width:114.6px;height:43.6px;background:linear-gradient(#5858ff 0%,#3c3ce8 38%,#2020cc 62%,#0000ac 100%);background-size:100% 104.6px;background-position:0 0px;background-repeat:no-repeat"></div><div class="abs" style="left:0px;top:44.6px;width:236.6px;height:60.99999999999999px;background:linear-gradient(#5858ff 0%,#3c3ce8 38%,#2020cc 62%,#0000ac 100%);background-size:100% 104.6px;background-position:0 -43.6px;background-repeat:no-repeat"></div><div class="abs" style="left:359.4px;top:1px;width:115.6px;height:43.6px;background:linear-gradient(#5858ff 0%,#3c3ce8 38%,#2020cc 62%,#0000ac 100%);background-size:100% 104.6px;background-position:0 0px;background-repeat:no-repeat"></div><div class="abs" style="left:238.8px;top:44.6px;width:236.2px;height:60.99999999999999px;background:linear-gradient(#5858ff 0%,#3c3ce8 38%,#2020cc 62%,#0000ac 100%);background-size:100% 104.6px;background-position:0 -43.6px;background-repeat:no-repeat"></div><div class="abs" style="left:3px;top:43.6px;width:108px;height:1px;background:#000090"></div><div class="abs" style="left:3px;top:44.6px;width:108px;height:1px;background:#7a7aff;opacity:.55"></div><div class="abs" style="left:363px;top:43.6px;width:108px;height:1px;background:#000090"></div><div class="abs" style="left:363px;top:44.6px;width:108px;height:1px;background:#7a7aff;opacity:.55"></div><div class="abs" style="left:117.6px;top:1.4px;width:239.6px;height:41.2px;background:#fff"></div><div class="abs" style="left:117.6px;top:1.4px;width:41.2px;height:41.2px;background:#fafafa;border-right:1px solid #b4b4b4"></div><div class="abs" style="left:314.6px;top:1.4px;width:42.6px;height:41.2px;background:#fafafa;border-left:1px solid #b4b4b4"></div><svg class="chart" style="left:117px;top:1px" width="241" height="41" viewBox="117 0 241 41"><path d="M133.8 18h9.6l-4.8 6z" fill="#1a1a1a"/><path d="M330.8 21.6h9.6l-4.8-6z" fill="#1a1a1a"/></svg></div><span class="t" style="left:1118.81px;top:195.00px;font-size:26.60px;line-height:26.60px;color:#fff;transform:scaleX(0.8289);">SELL</span><span class="t" style="left:1479.82px;top:195.00px;font-size:26.60px;line-height:26.60px;color:#fff;transform:scaleX(0.9011);">BUY</span><span class="t" style="left:1344.82px;top:193.00px;font-size:27.20px;line-height:27.20px;color:#000;transform:scaleX(0.9025);">0.01</span><span class="t" style="left:1130.28px;top:252.00px;font-size:27.60px;line-height:27.60px;color:#fff;font-weight:700;transform:scaleX(0.9961);">1.35</span><span class="t" style="left:1191.62px;top:236.00px;font-size:46.50px;line-height:46.50px;color:#fff;transform:scaleX(0.9380);">60</span><span class="t" style="left:1249.61px;top:240.00px;font-size:26.50px;line-height:26.50px;color:#fff;font-weight:700;transform:scaleX(1.0598);">7</span><span class="t" style="left:1368.28px;top:252.00px;font-size:27.60px;line-height:27.60px;color:#fff;font-weight:700;transform:scaleX(0.9961);">1.35</span><span class="t" style="left:1429.60px;top:236.00px;font-size:46.50px;line-height:46.50px;color:#fff;transform:scaleX(0.9473);">61</span><span class="t" style="left:1487.93px;top:240.00px;font-size:26.50px;line-height:26.50px;color:#fff;font-weight:700;transform:scaleX(1.0114);">8</span><svg class="chart" style="left:0px;top:567px" width="1066" height="361" viewBox="0 567 1066 361" shape-rendering="crispEdges" ><rect x="0" y="567" width="1066" height="361" fill="#000"/><path d="M47.5 570V901M111.5 570V901M175.5 570V901M239.5 570V901M303.5 570V901M367.5 570V901M431.5 570V901M495.5 570V901M559.5 570V901M623.5 570V901M687.5 570V901M751.5 570V901M815.5 570V901M879.5 570V901M943.5 570V901M0 709.5H988M0 773.5H988M0 837.5H988" stroke="#778899" stroke-width="1" stroke-dasharray="3 3" fill="none"/><path d="M0 853.5H988" stroke="#778899" stroke-width="1"/><path d="M3 836h1v23h-1zM2 841h1v1h-1zM4 848h1v1h-1zM7 826h1v12h-1zM6 830h1v1h-1zM8 833h1v1h-1zM11 821h1v11h-1zM10 827h1v1h-1zM12 821h1v1h-1zM15 825h1v10h-1zM14 825h1v1h-1zM16 833h1v1h-1zM19 813h1v25h-1zM18 819h1v1h-1zM20 818h1v1h-1zM23 810h1v18h-1zM22 827h1v1h-1zM24 818h1v1h-1zM27 803h1v35h-1zM26 832h1v1h-1zM28 819h1v1h-1zM31 807h1v20h-1zM30 819h1v1h-1zM32 810h1v1h-1zM35 815h1v13h-1zM34 823h1v1h-1zM36 826h1v1h-1zM39 795h1v27h-1zM38 809h1v1h-1zM40 815h1v1h-1zM43 774h1v30h-1zM42 794h1v1h-1zM44 775h1v1h-1zM47 754h1v40h-1zM46 784h1v1h-1zM48 777h1v1h-1zM51 735h1v32h-1zM50 744h1v1h-1zM52 735h1v1h-1zM55 756h1v16h-1zM54 769h1v1h-1zM56 763h1v1h-1zM59 751h1v20h-1zM58 765h1v1h-1zM60 768h1v1h-1zM63 756h1v13h-1zM62 765h1v1h-1zM64 767h1v1h-1zM67 762h1v12h-1zM66 766h1v1h-1zM68 771h1v1h-1zM71 766h1v21h-1zM70 775h1v1h-1zM72 785h1v1h-1zM75 774h1v11h-1zM74 783h1v1h-1zM76 775h1v1h-1zM79 770h1v22h-1zM78 772h1v1h-1zM80 774h1v1h-1zM83 773h1v12h-1zM82 784h1v1h-1zM84 778h1v1h-1zM87 773h1v11h-1zM86 779h1v1h-1zM88 776h1v1h-1zM91 755h1v25h-1zM90 767h1v1h-1zM92 764h1v1h-1zM95 754h1v13h-1zM94 758h1v1h-1zM96 761h1v1h-1zM99 747h1v14h-1zM98 755h1v1h-1zM100 759h1v1h-1zM103 751h1v18h-1zM102 763h1v1h-1zM104 767h1v1h-1zM107 751h1v17h-1zM106 765h1v1h-1zM108 767h1v1h-1zM111 759h1v12h-1zM110 767h1v1h-1zM112 760h1v1h-1zM115 755h1v16h-1zM114 768h1v1h-1zM116 770h1v1h-1zM119 756h1v26h-1zM118 779h1v1h-1zM120 770h1v1h-1zM123 760h1v29h-1zM122 780h1v1h-1zM124 766h1v1h-1zM127 764h1v32h-1zM126 790h1v1h-1zM128 782h1v1h-1zM131 787h1v17h-1zM130 791h1v1h-1zM132 788h1v1h-1zM135 773h1v30h-1zM134 798h1v1h-1zM136 802h1v1h-1zM139 773h1v20h-1zM138 774h1v1h-1zM140 789h1v1h-1zM143 777h1v25h-1zM142 787h1v1h-1zM144 780h1v1h-1zM147 761h1v28h-1zM146 769h1v1h-1zM148 782h1v1h-1zM151 774h1v21h-1zM150 792h1v1h-1zM152 774h1v1h-1zM155 777h1v15h-1zM154 786h1v1h-1zM156 777h1v1h-1zM159 776h1v15h-1zM158 786h1v1h-1zM160 780h1v1h-1zM163 767h1v18h-1zM162 782h1v1h-1zM164 784h1v1h-1zM167 766h1v10h-1zM166 771h1v1h-1zM168 775h1v1h-1zM171 765h1v17h-1zM170 770h1v1h-1zM172 766h1v1h-1zM175 764h1v53h-1zM174 795h1v1h-1zM176 765h1v1h-1zM179 762h1v27h-1zM178 767h1v1h-1zM180 773h1v1h-1zM183 759h1v20h-1zM182 771h1v1h-1zM184 762h1v1h-1zM187 774h1v18h-1zM186 774h1v1h-1zM188 789h1v1h-1zM191 779h1v19h-1zM190 784h1v1h-1zM192 797h1v1h-1zM195 764h1v22h-1zM194 783h1v1h-1zM196 772h1v1h-1zM199 762h1v17h-1zM198 769h1v1h-1zM200 770h1v1h-1zM203 764h1v12h-1zM202 771h1v1h-1zM204 771h1v1h-1zM207 753h1v18h-1zM206 763h1v1h-1zM208 764h1v1h-1zM211 741h1v24h-1zM210 763h1v1h-1zM212 753h1v1h-1zM215 750h1v20h-1zM214 758h1v1h-1zM216 764h1v1h-1zM219 758h1v17h-1zM218 762h1v1h-1zM220 763h1v1h-1zM223 762h1v14h-1zM222 775h1v1h-1zM224 769h1v1h-1zM227 770h1v17h-1zM226 779h1v1h-1zM228 770h1v1h-1zM231 776h1v14h-1zM230 781h1v1h-1zM232 784h1v1h-1zM235 779h1v22h-1zM234 779h1v1h-1zM236 792h1v1h-1zM239 772h1v23h-1zM238 786h1v1h-1zM240 773h1v1h-1zM243 773h1v18h-1zM242 784h1v1h-1zM244 781h1v1h-1zM247 754h1v31h-1zM246 775h1v1h-1zM248 764h1v1h-1zM251 750h1v13h-1zM250 759h1v1h-1zM252 759h1v1h-1zM255 746h1v11h-1zM254 746h1v1h-1zM256 746h1v1h-1zM259 746h1v11h-1zM258 753h1v1h-1zM260 756h1v1h-1zM263 746h1v10h-1zM262 748h1v1h-1zM264 750h1v1h-1zM267 746h1v7h-1zM266 750h1v1h-1zM268 748h1v1h-1zM271 754h1v30h-1zM270 764h1v1h-1zM272 763h1v1h-1zM275 751h1v12h-1zM274 755h1v1h-1zM276 758h1v1h-1zM279 745h1v11h-1zM278 748h1v1h-1zM280 749h1v1h-1zM283 748h1v23h-1zM282 765h1v1h-1zM284 748h1v1h-1zM287 752h1v19h-1zM286 762h1v1h-1zM288 765h1v1h-1zM291 752h1v18h-1zM290 757h1v1h-1zM292 756h1v1h-1zM295 769h1v10h-1zM294 777h1v1h-1zM296 771h1v1h-1zM299 770h1v9h-1zM298 771h1v1h-1zM300 773h1v1h-1zM303 770h1v12h-1zM302 778h1v1h-1zM304 771h1v1h-1zM307 775h1v13h-1zM306 779h1v1h-1zM308 779h1v1h-1zM311 775h1v30h-1zM310 800h1v1h-1zM312 788h1v1h-1z" fill="#00ff00"/><g shape-rendering="crispEdges"><polyline points="0,825.5 10.1,829.5 20.2,833.5 27.3,835.6 35.4,834 43.5,826.5 50.6,814.3 58.7,802.2 66.8,793.1 74.9,786 83,780.9 91.1,771.8 99.2,767.4 107.2,767.4 115.3,766.4 123.4,767.4 133.5,771.2 143.7,771.2 151.8,775.3 161.9,778.9 172,781.3 180.1,781.3 190.2,779.3 200.3,776.5 210.4,771.8 216.5,770.2 227.6,770.2 238.8,774.5 246.9,771.8 255,768.8 263.1,767.8 271.1,766.4 281.3,763.7 289.4,759.7 295.4,758.3 303.5,758.7 309.6,763.3 314.6,767.4" fill="none" stroke="#ff0000" stroke-width="1" /></g><path d="M0 569.5H989" stroke="#fff" stroke-width="1"/><path d="M0 901.5H989" stroke="#fff" stroke-width="1"/><path d="M111.5 902v6M239.5 902v6M367.5 902v6" stroke="#fff" stroke-width="1"/><g shape-rendering="auto"><text x="3.1" y="918.8" fill="#fff" font-size="14.2" textLength="51.4" lengthAdjust="spacingAndGlyphs" xml:space="preserve">Jul 2025</text><text x="111.8" y="918.8" fill="#fff" font-size="14.2" textLength="75.6" lengthAdjust="spacingAndGlyphs" xml:space="preserve">11 Jul 08:00</text><text x="239.9" y="918.8" fill="#fff" font-size="14.2" textLength="75.8" lengthAdjust="spacingAndGlyphs" xml:space="preserve">14 Jul 16:00</text><text x="50.9" y="590.6" fill="#fff" font-size="14.2" textLength="237.6" lengthAdjust="spacingAndGlyphs" xml:space="preserve">USDCHF, H1:  US Dollar vs Swiss Franc</text><g shape-rendering="auto"><rect x="-8.4" y="578.0" width="20.8" height="15.2" rx="1.5" fill="#fff" stroke="#e03030" stroke-width="1.5"/><path d="M2.1999999999999993 578.0h9.2a1 1 0 0 1 1 1v13.2a1 1 0 0 1-1 1h-9.2z" fill="#fff" stroke="#2272c0" stroke-width="1.5"/><path d="M-6.2 581.4h7.4" stroke="#e84040" stroke-width="1.7"/><path d="M3.1999999999999993 581.4h7" stroke="#2f7fd0" stroke-width="1.7"/><path d="M-6.2 585.6h7.4" stroke="#e84040" stroke-width="1.7"/><path d="M3.1999999999999993 585.6h7" stroke="#2f7fd0" stroke-width="1.7"/><path d="M-6.2 589.8h7.4" stroke="#e84040" stroke-width="1.7"/><path d="M3.1999999999999993 589.8h7" stroke="#2f7fd0" stroke-width="1.7"/><path d="M23.0 578.0h5.4v6.6h4.4v8.6h-9.8z" fill="#ffd8d0" stroke="#e03030" stroke-width="1.5"/><path d="M34.6 593.2v-8.6h5v-6.6h4.6v15.2z" fill="#bfe0ff" stroke="#2272c0" stroke-width="1.5"/><rect x="30.6" y="577.6" width="7.6" height="3.2" rx="1.4" fill="#eee" stroke="#9a9a9a" stroke-width="1"/></g></g></svg><div class="abs" style="left:-13px;top:600.2px;width:475px;height:106px"><div class="abs" style="left:-2px;top:0;width:478px;height:106.6px;background:#000"></div><div class="abs" style="left:0px;top:1px;width:114.6px;height:43.6px;background:linear-gradient(#5858ff 0%,#3c3ce8 38%,#2020cc 62%,#0000ac 100%);background-size:100% 104.6px;background-position:0 0px;background-repeat:no-repeat"></div><div class="abs" style="left:0px;top:44.6px;width:236.6px;height:60.99999999999999px;background:linear-gradient(#5858ff 0%,#3c3ce8 38%,#2020cc 62%,#0000ac 100%);background-size:100% 104.6px;background-position:0 -43.6px;background-repeat:no-repeat"></div><div class="abs" style="left:359.4px;top:1px;width:115.6px;height:43.6px;background:linear-gradient(#ff5656 0%,#e63a3a 38%,#cc1c1c 62%,#b00000 100%);background-size:100% 104.6px;background-position:0 0px;background-repeat:no-repeat"></div><div class="abs" style="left:238.8px;top:44.6px;width:236.2px;height:60.99999999999999px;background:linear-gradient(#ff5656 0%,#e63a3a 38%,#cc1c1c 62%,#b00000 100%);background-size:100% 104.6px;background-position:0 -43.6px;background-repeat:no-repeat"></div><div class="abs" style="left:3px;top:43.6px;width:108px;height:1px;background:#000090"></div><div class="abs" style="left:3px;top:44.6px;width:108px;height:1px;background:#7a7aff;opacity:.55"></div><div class="abs" style="left:363px;top:43.6px;width:108px;height:1px;background:#9a0000"></div><div class="abs" style="left:363px;top:44.6px;width:108px;height:1px;background:#ff7a7a;opacity:.55"></div><div class="abs" style="left:117.6px;top:1.4px;width:239.6px;height:41.2px;background:#fff"></div><div class="abs" style="left:117.6px;top:1.4px;width:41.2px;height:41.2px;background:#fafafa;border-right:1px solid #b4b4b4"></div><div class="abs" style="left:314.6px;top:1.4px;width:42.6px;height:41.2px;background:#fafafa;border-left:1px solid #b4b4b4"></div><svg class="chart" style="left:117px;top:1px" width="241" height="41" viewBox="117 0 241 41"><path d="M133.8 18h9.6l-4.8 6z" fill="#1a1a1a"/><path d="M330.8 21.6h9.6l-4.8-6z" fill="#1a1a1a"/></svg></div><span class="t" style="left:17.41px;top:611.00px;font-size:26.60px;line-height:26.60px;color:#fff;transform:scaleX(0.8289);">SELL</span><span class="t" style="left:243.42px;top:610.00px;font-size:27.20px;line-height:27.20px;color:#000;transform:scaleX(0.9025);">0.01</span><span class="t" style="left:29.51px;top:668.00px;font-size:27.60px;line-height:27.60px;color:#fff;font-weight:700;transform:scaleX(0.9881);">0.79</span><span class="t" style="left:90.21px;top:652.00px;font-size:46.50px;line-height:46.50px;color:#fff;transform:scaleX(0.9426);">28</span><span class="t" style="left:148.44px;top:657.00px;font-size:26.50px;line-height:26.50px;color:#fff;font-weight:700;transform:scaleX(1.0324);">2</span><span class="t" style="left:267.51px;top:668.00px;font-size:27.60px;line-height:27.60px;color:#fff;font-weight:700;transform:scaleX(0.9881);">0.79</span><svg class="chart" style="left:1082px;top:567px" width="761" height="361" viewBox="1082 567 761 361" shape-rendering="crispEdges" ><rect x="1082" y="567" width="761" height="361" fill="#000"/><path d="M1148.5 570V790M1212.5 570V790M1276.5 570V790M1340.5 570V790M1404.5 570V790M1468.5 570V790M1532.5 570V790M1596.5 570V790M1660.5 570V790M1724.5 570V790M1788.5 570V790M1085 597.5H1843M1085 661.5H1843M1085 725.5H1843" stroke="#778899" stroke-width="1" stroke-dasharray="3 3" fill="none"/><path d="M1148.5 793V901M1212.5 793V901M1276.5 793V901M1340.5 793V901M1404.5 793V901M1468.5 793V901M1532.5 793V901M1596.5 793V901M1660.5 793V901M1724.5 793V901M1788.5 793V901" stroke="#778899" stroke-width="1" stroke-dasharray="3 3" fill="none"/><path d="M1085 753.5H1843" stroke="#778899" stroke-width="1"/><path d="M1480 591h1v8h-1zM1479 595h1v1h-1zM1481 596h1v1h-1zM1484 591h1v8h-1zM1483 597h1v1h-1zM1485 598h1v1h-1zM1488 594h1v5h-1zM1487 597h1v1h-1zM1489 598h1v1h-1zM1492 587h1v12h-1zM1491 587h1v1h-1zM1493 592h1v1h-1zM1496 581h1v16h-1zM1495 596h1v1h-1zM1497 591h1v1h-1zM1500 595h1v4h-1zM1499 598h1v1h-1zM1501 595h1v1h-1zM1508 596h1v3h-1zM1507 597h1v1h-1zM1509 596h1v1h-1zM1512 597h1v2h-1zM1511 598h1v1h-1zM1513 598h1v1h-1zM1532 595h1v4h-1zM1531 595h1v1h-1zM1533 595h1v1h-1zM1540 708h1v8h-1zM1539 710h1v1h-1zM1541 715h1v1h-1zM1568 655h1v12h-1zM1567 664h1v1h-1zM1569 656h1v1h-1zM1572 647h1v19h-1zM1571 662h1v1h-1zM1573 649h1v1h-1zM1576 626h1v27h-1zM1575 642h1v1h-1zM1577 629h1v1h-1zM1580 622h1v13h-1zM1579 622h1v1h-1zM1581 633h1v1h-1zM1584 622h1v10h-1zM1583 624h1v1h-1zM1585 624h1v1h-1zM1588 612h1v14h-1zM1587 625h1v1h-1zM1589 624h1v1h-1zM1592 615h1v13h-1zM1591 618h1v1h-1zM1593 627h1v1h-1zM1596 622h1v8h-1zM1595 626h1v1h-1zM1597 627h1v1h-1zM1600 605h1v20h-1zM1599 609h1v1h-1zM1601 623h1v1h-1zM1604 606h1v11h-1zM1603 613h1v1h-1zM1605 616h1v1h-1zM1608 606h1v12h-1zM1607 616h1v1h-1zM1609 609h1v1h-1zM1612 606h1v15h-1zM1611 611h1v1h-1zM1613 608h1v1h-1zM1616 602h1v14h-1zM1615 604h1v1h-1zM1617 602h1v1h-1zM1620 605h1v12h-1zM1619 608h1v1h-1zM1621 612h1v1h-1zM1624 587h1v30h-1zM1623 587h1v1h-1zM1625 607h1v1h-1zM1628 607h1v18h-1zM1627 613h1v1h-1zM1629 612h1v1h-1zM1632 613h1v17h-1zM1631 626h1v1h-1zM1633 621h1v1h-1zM1636 615h1v10h-1zM1635 618h1v1h-1zM1637 619h1v1h-1zM1640 610h1v14h-1zM1639 619h1v1h-1zM1641 610h1v1h-1zM1644 612h1v7h-1zM1643 618h1v1h-1zM1645 612h1v1h-1zM1648 607h1v7h-1zM1647 612h1v1h-1zM1649 612h1v1h-1zM1652 607h1v13h-1zM1651 607h1v1h-1zM1653 617h1v1h-1zM1656 615h1v3h-1zM1655 616h1v1h-1zM1657 616h1v1h-1zM1660 617h1v7h-1zM1659 617h1v1h-1zM1661 617h1v1h-1zM1664 617h1v16h-1zM1663 619h1v1h-1zM1665 632h1v1h-1zM1668 624h1v11h-1zM1667 626h1v1h-1zM1669 632h1v1h-1zM1672 614h1v19h-1zM1671 631h1v1h-1zM1673 631h1v1h-1zM1676 614h1v16h-1zM1675 619h1v1h-1zM1677 619h1v1h-1zM1680 618h1v10h-1zM1679 623h1v1h-1zM1681 625h1v1h-1zM1684 612h1v12h-1zM1683 613h1v1h-1zM1685 620h1v1h-1zM1688 611h1v4h-1zM1687 614h1v1h-1zM1689 614h1v1h-1zM1692 603h1v10h-1zM1691 603h1v1h-1zM1693 612h1v1h-1zM1696 602h1v8h-1zM1695 602h1v1h-1zM1697 604h1v1h-1zM1700 599h1v15h-1zM1699 608h1v1h-1zM1701 612h1v1h-1zM1704 606h1v17h-1zM1703 611h1v1h-1zM1705 621h1v1h-1zM1708 609h1v12h-1zM1707 615h1v1h-1zM1709 612h1v1h-1zM1712 609h1v13h-1zM1711 613h1v1h-1zM1713 611h1v1h-1zM1716 617h1v8h-1zM1715 617h1v1h-1zM1717 618h1v1h-1zM1720 620h1v13h-1zM1719 628h1v1h-1zM1721 632h1v1h-1zM1724 624h1v18h-1zM1723 626h1v1h-1zM1725 624h1v1h-1zM1728 622h1v19h-1zM1727 640h1v1h-1zM1729 632h1v1h-1zM1732 618h1v13h-1zM1731 623h1v1h-1zM1733 621h1v1h-1zM1736 609h1v13h-1zM1735 616h1v1h-1zM1737 619h1v1h-1zM1740 605h1v8h-1zM1739 608h1v1h-1zM1741 608h1v1h-1zM1744 606h1v4h-1zM1743 606h1v1h-1zM1745 609h1v1h-1zM1748 604h1v5h-1zM1747 604h1v1h-1zM1749 606h1v1h-1zM1752 601h1v9h-1zM1751 608h1v1h-1zM1753 602h1v1h-1zM1756 638h1v23h-1zM1755 654h1v1h-1zM1757 659h1v1h-1zM1760 613h1v30h-1zM1759 631h1v1h-1zM1761 636h1v1h-1zM1764 613h1v17h-1zM1763 614h1v1h-1zM1765 620h1v1h-1zM1768 624h1v14h-1zM1767 626h1v1h-1zM1769 635h1v1h-1zM1772 619h1v13h-1zM1771 622h1v1h-1zM1773 624h1v1h-1zM1776 619h1v7h-1zM1775 625h1v1h-1zM1777 624h1v1h-1zM1780 619h1v9h-1zM1779 627h1v1h-1zM1781 623h1v1h-1zM1784 620h1v7h-1zM1783 623h1v1h-1zM1785 625h1v1h-1zM1788 624h1v12h-1zM1787 629h1v1h-1zM1789 627h1v1h-1zM1792 633h1v32h-1zM1791 645h1v1h-1zM1793 637h1v1h-1zM1796 637h1v19h-1zM1795 644h1v1h-1zM1797 655h1v1h-1zM1800 643h1v27h-1zM1799 668h1v1h-1zM1801 659h1v1h-1zM1804 653h1v8h-1zM1803 656h1v1h-1zM1805 655h1v1h-1zM1808 653h1v13h-1zM1807 654h1v1h-1zM1809 656h1v1h-1zM1812 664h1v17h-1zM1811 677h1v1h-1zM1813 678h1v1h-1zM1816 677h1v14h-1zM1815 682h1v1h-1zM1817 688h1v1h-1zM1820 667h1v15h-1zM1819 678h1v1h-1zM1821 677h1v1h-1zM1824 678h1v16h-1zM1823 688h1v1h-1zM1825 690h1v1h-1zM1828 685h1v10h-1zM1827 688h1v1h-1zM1829 692h1v1h-1zM1832 690h1v16h-1zM1831 694h1v1h-1zM1833 697h1v1h-1zM1836 691h1v12h-1zM1835 700h1v1h-1zM1837 699h1v1h-1zM1840 687h1v11h-1zM1839 690h1v1h-1zM1841 697h1v1h-1z" fill="#00ff00"/><path d="M1480 804h1v45h-1zM1481 848h3v1h-3zM1484 806h1v43h-1zM1488 807h1v42h-1zM1489 848h3v1h-3zM1492 807h1v42h-1zM1496 809h1v40h-1zM1497 848h3v1h-3zM1500 812h1v37h-1zM1504 816h1v33h-1zM1505 848h3v1h-3zM1508 817h1v32h-1zM1512 819h1v30h-1zM1513 848h3v1h-3zM1516 822h1v27h-1zM1520 824h1v25h-1zM1521 848h3v1h-3zM1524 827h1v22h-1zM1528 829h1v20h-1zM1529 848h3v1h-3zM1532 830h1v19h-1zM1536 834h1v15h-1zM1537 848h3v1h-3zM1540 841h1v8h-1zM1544 848h1v1h-1zM1545 848h3v1h-3zM1548 848h1v11h-1zM1552 848h1v16h-1zM1553 848h3v1h-3zM1556 848h1v20h-1zM1560 848h1v23h-1zM1561 848h3v1h-3zM1564 848h1v25h-1zM1568 848h1v26h-1zM1569 848h3v1h-3zM1572 848h1v25h-1zM1576 848h1v19h-1zM1577 848h3v1h-3zM1580 848h1v17h-1zM1584 848h1v13h-1zM1585 848h3v1h-3zM1588 848h1v9h-1zM1592 848h1v6h-1zM1593 848h3v1h-3zM1596 848h1v3h-1zM1600 847h1v2h-1zM1601 848h3v1h-3zM1604 844h1v5h-1zM1608 842h1v7h-1zM1609 848h3v1h-3zM1612 840h1v9h-1zM1616 838h1v11h-1zM1617 848h3v1h-3zM1620 836h1v13h-1zM1624 836h1v13h-1zM1625 848h3v1h-3zM1628 836h1v13h-1zM1632 838h1v11h-1zM1633 848h3v1h-3zM1636 838h1v11h-1zM1640 838h1v11h-1zM1641 848h3v1h-3zM1644 838h1v11h-1zM1648 838h1v11h-1zM1649 848h3v1h-3zM1652 838h1v11h-1zM1656 839h1v10h-1zM1657 848h3v1h-3zM1660 843h1v6h-1zM1664 845h1v4h-1zM1665 848h3v1h-3zM1668 846h1v3h-1zM1672 847h1v2h-1zM1673 848h3v1h-3zM1676 846h1v3h-1zM1680 846h1v3h-1zM1681 848h3v1h-3zM1684 845h1v4h-1zM1688 844h1v5h-1zM1689 848h3v1h-3zM1692 843h1v6h-1zM1696 841h1v8h-1zM1697 848h3v1h-3zM1700 841h1v8h-1zM1704 842h1v7h-1zM1705 848h3v1h-3zM1708 842h1v7h-1zM1712 844h1v5h-1zM1713 848h3v1h-3zM1716 845h1v4h-1zM1720 846h1v3h-1zM1721 848h3v1h-3zM1724 848h1v5h-1zM1728 848h1v5h-1zM1729 848h3v1h-3zM1732 848h1v3h-1zM1736 848h1v2h-1zM1737 848h3v1h-3zM1740 848h1v1h-1zM1744 847h1v2h-1zM1745 848h3v1h-3zM1748 843h1v6h-1zM1752 842h1v7h-1zM1753 848h3v1h-3zM1756 847h1v2h-1zM1760 848h1v2h-1zM1761 848h3v1h-3zM1764 848h1v2h-1zM1768 848h1v3h-1zM1769 848h3v1h-3zM1772 848h1v4h-1zM1776 848h1v4h-1zM1777 848h3v1h-3zM1780 848h1v5h-1zM1784 848h1v5h-1zM1785 848h3v1h-3zM1788 848h1v6h-1zM1792 848h1v12h-1zM1793 848h3v1h-3zM1796 848h1v14h-1zM1800 848h1v18h-1zM1801 848h3v1h-3zM1804 848h1v21h-1zM1808 848h1v23h-1zM1809 848h3v1h-3zM1812 848h1v27h-1zM1816 848h1v30h-1zM1817 848h3v1h-3zM1820 848h1v33h-1zM1824 848h1v36h-1zM1825 848h3v1h-3zM1828 848h1v39h-1zM1832 848h1v42h-1zM1833 848h3v1h-3zM1836 848h1v44h-1zM1840 848h1v45h-1zM1841 848h3v1h-3z" fill="#c4c8cc"/><g shape-rendering="crispEdges"><polyline points="1480.5,803.4 1493.9,803.4 1504.2,807.1 1516.6,813.7 1531,821.5 1545.5,832.9 1557.8,846.3 1566.1,856.6 1574.3,863.8 1582.6,867.3 1590.8,864.8 1599.1,860.7 1607.3,853.5 1615.6,847.9 1623.8,843.2 1634.1,839.1 1646.5,838.5 1658.9,839.1 1669.2,841.1 1683.6,843.8 1696,845.3 1710.4,843.6 1724.9,844.2 1737.2,846.7 1751.7,847.3 1766.1,847.3 1780.5,848.4 1792.9,851.4 1805.3,857.6 1817.6,866.9 1830,876.2 1840.3,883 1844.4,885.5" fill="none" stroke="#ff0000" stroke-width="1" stroke-dasharray="4 3" /></g><path d="M1084 569.5H1843" stroke="#fff" stroke-width="1"/><path d="M1084 901.5H1843" stroke="#fff" stroke-width="1"/><path d="M1084 790.5H1843" stroke="#fff" stroke-width="1"/><path d="M1084 792.5H1843" stroke="#e0e0e0" stroke-width="1"/><path d="M1596.5 902v6M1724.5 902v6" stroke="#fff" stroke-width="1"/><g shape-rendering="auto"><text x="1468.9" y="918.8" fill="#fff" font-size="14.2" textLength="76.0" lengthAdjust="spacingAndGlyphs" xml:space="preserve">16 Jul 00:00</text><text x="1596.7" y="918.8" fill="#fff" font-size="14.2" textLength="75.8" lengthAdjust="spacingAndGlyphs" xml:space="preserve">17 Jul 08:00</text><text x="1724.9" y="918.8" fill="#fff" font-size="14.2" textLength="75.4" lengthAdjust="spacingAndGlyphs" xml:space="preserve">18 Jul 16:00</text></g></svg><div class="abs" style="left:1088.4px;top:600.2px;width:475px;height:106px"><div class="abs" style="left:-2px;top:0;width:478px;height:106.6px;background:#000"></div><div class="abs" style="left:0px;top:1px;width:114.6px;height:43.6px;background:linear-gradient(#5858ff 0%,#3c3ce8 38%,#2020cc 62%,#0000ac 100%);background-size:100% 104.6px;background-position:0 0px;background-repeat:no-repeat"></div><div class="abs" style="left:0px;top:44.6px;width:236.6px;height:60.99999999999999px;background:linear-gradient(#5858ff 0%,#3c3ce8 38%,#2020cc 62%,#0000ac 100%);background-size:100% 104.6px;background-position:0 -43.6px;background-repeat:no-repeat"></div><div class="abs" style="left:359.4px;top:1px;width:115.6px;height:43.6px;background:linear-gradient(#ff5656 0%,#e63a3a 38%,#cc1c1c 62%,#b00000 100%);background-size:100% 104.6px;background-position:0 0px;background-repeat:no-repeat"></div><div class="abs" style="left:238.8px;top:44.6px;width:236.2px;height:60.99999999999999px;background:linear-gradient(#ff5656 0%,#e63a3a 38%,#cc1c1c 62%,#b00000 100%);background-size:100% 104.6px;background-position:0 -43.6px;background-repeat:no-repeat"></div><div class="abs" style="left:3px;top:43.6px;width:108px;height:1px;background:#000090"></div><div class="abs" style="left:3px;top:44.6px;width:108px;height:1px;background:#7a7aff;opacity:.55"></div><div class="abs" style="left:363px;top:43.6px;width:108px;height:1px;background:#9a0000"></div><div class="abs" style="left:363px;top:44.6px;width:108px;height:1px;background:#ff7a7a;opacity:.55"></div><div class="abs" style="left:117.6px;top:1.4px;width:239.6px;height:41.2px;background:#fff"></div><div class="abs" style="left:117.6px;top:1.4px;width:41.2px;height:41.2px;background:#fafafa;border-right:1px solid #b4b4b4"></div><div class="abs" style="left:314.6px;top:1.4px;width:42.6px;height:41.2px;background:#fafafa;border-left:1px solid #b4b4b4"></div><svg class="chart" style="left:117px;top:1px" width="241" height="41" viewBox="117 0 241 41"><path d="M133.8 18h9.6l-4.8 6z" fill="#1a1a1a"/><path d="M330.8 21.6h9.6l-4.8-6z" fill="#1a1a1a"/></svg></div><span class="t" style="left:1479.82px;top:611.00px;font-size:26.60px;line-height:26.60px;color:#fff;transform:scaleX(0.9011);">BUY</span><span class="t" style="left:1487.85px;top:657.00px;font-size:26.50px;line-height:26.50px;color:#fff;font-weight:700;transform:scaleX(1.0270);">9</span></main><footer><div style="position:absolute;left:0px;top:928px;width:1843px;height:8px;background:linear-gradient(#fafafa,#e4e4e4)"></div><div style="position:absolute;left:0px;top:936px;width:1843px;height:2px;background:#5a5a5a"></div><div style="position:absolute;left:0px;top:938px;width:1843px;height:46px;background:#f0f0f0"></div><div style="position:absolute;left:-2px;top:937px;width:151px;height:41px;background:#fff;border:2px solid #000;border-top:1px solid #000"></div><span class="t" style="left:-5.05px;top:947.00px;font-size:26.40px;line-height:26.40px;color:#000;transform:scaleX(0.8934);">EURUSD,H1</span><span class="t" style="left:164.47px;top:947.00px;font-size:26.40px;line-height:26.40px;color:#747474;transform:scaleX(0.9433);">USDCHF,H1</span><span class="t" style="left:337.79px;top:947.00px;font-size:26.40px;line-height:26.40px;color:#747474;transform:scaleX(0.9143);">GBPUSD,H1</span><span class="t" style="left:511.53px;top:947.00px;font-size:26.40px;line-height:26.40px;color:#747474;transform:scaleX(0.9153);">USDJPY,H1</span><div style="position:absolute;left:322px;top:941px;width:1px;height:35px;background:#8a8a8a"></div><div style="position:absolute;left:495px;top:941px;width:1px;height:35px;background:#8a8a8a"></div><div style="position:absolute;left:0px;top:984px;width:1843px;height:1px;background:#a0a0a0"></div><div style="position:absolute;left:0px;top:985px;width:1843px;height:201px;background:#fff"></div><div style="position:absolute;left:0px;top:1028px;width:1843px;height:40px;background:#fff"></div><div style="position:absolute;left:0px;top:1069px;width:1843px;height:40px;background:#ebebeb"></div><div style="position:absolute;left:0px;top:1110px;width:1843px;height:40px;background:#fff"></div><div style="position:absolute;left:0px;top:1151px;width:1843px;height:35px;background:#ebebeb"></div><div style="position:absolute;left:0px;top:1068px;width:1843px;height:1px;background:#cfcfcf"></div><div style="position:absolute;left:0px;top:1109px;width:1843px;height:1px;background:#cfcfcf"></div><div style="position:absolute;left:0px;top:1150px;width:1843px;height:1px;background:#cfcfcf"></div><div style="position:absolute;left:904px;top:985px;width:1px;height:43px;background:#a8a8a8"></div><div style="position:absolute;left:904px;top:1028px;width:1px;height:158px;background:#d4d4d4"></div><div style="position:absolute;left:1402px;top:985px;width:1px;height:43px;background:#a8a8a8"></div><div style="position:absolute;left:1402px;top:1028px;width:1px;height:158px;background:#d4d4d4"></div><span class="t" style="left:913.62px;top:996.00px;font-size:26.60px;line-height:26.60px;color:#000;transform:scaleX(0.9945);">From</span><span class="t" style="left:1412.64px;top:996.00px;font-size:26.60px;line-height:26.60px;color:#000;transform:scaleX(0.9318);">To</span><span class="t" style="left:-0.78px;top:1037.00px;font-size:26.60px;line-height:26.60px;color:#000;font-weight:700;transform:scaleX(1.0298);">ng app</span><span class="t" style="left:-14.92px;top:1078.00px;font-size:26.60px;line-height:26.60px;color:#000;font-weight:700;transform:scaleX(1.0548);">directly in the platform</span><span class="t" style="left:-8.21px;top:1119.00px;font-size:26.60px;line-height:26.60px;color:#000;font-weight:700;transform:scaleX(1.0497);">you optimize your portfolio</span><span class="t" style="left:911.53px;top:1037.00px;font-size:26.60px;line-height:26.60px;color:#000;font-weight:700;transform:scaleX(1.0283);">Trading Platform</span><span class="t" style="left:911.53px;top:1078.00px;font-size:26.60px;line-height:26.60px;color:#000;font-weight:700;transform:scaleX(1.0283);">Trading Platform</span><span class="t" style="left:911.53px;top:1119.00px;font-size:26.60px;line-height:26.60px;color:#000;font-weight:700;transform:scaleX(1.0283);">Trading Platform</span><span class="t" style="left:911.53px;top:1160.00px;font-size:26.60px;line-height:26.60px;color:#000;font-weight:700;transform:scaleX(1.0283);">Trading Platform</span></footer><section class="abs" style="left:0;top:0"><div class="abs" style="left:315px;top:368px;width:1163px;height:572px;border-radius:9px;background:#fff;box-shadow:0 0 0 1px rgba(0,0,0,.30),0 0 3px rgba(0,0,0,.26),0 40px 90px -20px rgba(0,0,0,.29)"></div><div class="abs" style="left:315px;top:368px;width:1163px;height:48.4px;border-radius:9px 9px 0 0;background:#f3f3f3"></div><span class="t" style="left:325.71px;top:379.00px;font-size:27.40px;line-height:27.40px;color:#8d8d8d;transform:scaleX(0.9898);">Order</span><svg class="chart" style="left:1260px;top:378px" width="200" height="28" viewBox="1260 378 200 28" fill="none"><path d="M1268.2 391.3h14.6" stroke="#9a9a9a" stroke-width="1.2"/><rect x="1349.4" y="384.3" width="14.2" height="14.2" rx="2" stroke="#d6d6d6" stroke-width="1.2"/><path d="M1430.2 384.4l14.8 14.6M1445 384.4l-14.8 14.6" stroke="#8c8c8c" stroke-width="1.2"/></svg><div class="abs" style="left:326.4px;top:431px;width:459.6px;height:485.6px;border-top:2px solid #7d7d7d;border-left:2px solid #7d7d7d;border-right:1px solid #dcdcdc;border-bottom:1px solid #dcdcdc;background:#fff"></div><svg class="chart" style="left:329px;top:434px" width="456" height="482" viewBox="329 434 456 482" shape-rendering="crispEdges" ><path d="M363.5 436V894M395.5 436V894M427.5 436V894M459.5 436V894M491.5 436V894M523.5 436V894M555.5 436V894M587.5 436V894M619.5 436V894M651.5 436V894M683.5 436V894M331 496.5H714M331 557.5H714M331 619.5H714M331 680.5H714M331 741.5H714M331 802.5H714M331 863.5H714" stroke="#dadada" stroke-width="1" stroke-dasharray="3 3" fill="none"/><g shape-rendering="crispEdges"><polyline points="330.5,600.5 331.5,594.4 332.5,582.2 333.5,582.2 334.5,588.3 335.5,594.4 336.5,588.3 337.5,594.4 338.5,600.5 339.5,600.5 340.5,612.8 341.5,606.7 342.5,600.5 343.5,594.4 344.5,600.5 345.5,600.5 346.5,594.4 347.5,588.3 348.5,594.4 349.5,600.5 350.5,600.5 351.5,588.3 352.5,594.4 353.5,594.4 354.5,594.4 355.5,594.4 356.5,588.3 357.5,582.2 358.5,588.3 359.5,582.2 360.5,594.4 361.5,588.3 362.5,600.5 363.5,594.4 364.5,600.5 365.5,606.7 366.5,606.7 367.5,600.5 368.5,606.7 369.5,594.4 370.5,600.5 371.5,600.5 372.5,594.4 373.5,600.5 374.5,594.4 375.5,606.7 376.5,600.5 377.5,612.8 378.5,606.7 379.5,612.8 380.5,600.5 381.5,612.8 382.5,594.4 383.5,600.5 384.5,606.7 385.5,600.5 386.5,600.5 387.5,594.4 388.5,582.2 389.5,594.4 390.5,588.3 391.5,582.2 392.5,569.9 393.5,569.9 394.5,557.7 395.5,551.6 396.5,545.5 397.5,551.6 398.5,539.3 399.5,539.3 400.5,527.1 401.5,533.2 402.5,527.1 403.5,521 404.5,508.7 405.5,502.6 406.5,484.3 407.5,490.4 408.5,484.3 409.5,484.3 410.5,484.3 411.5,484.3 412.5,502.6 413.5,508.7 414.5,514.9 415.5,521 416.5,533.2 417.5,545.5 418.5,539.3 419.5,557.7 420.5,551.6 421.5,557.7 422.5,551.6 423.5,551.6 424.5,545.5 425.5,533.2 426.5,539.3 427.5,533.2 428.5,527.1 429.5,521 430.5,521 431.5,502.6 432.5,502.6 433.5,502.6 434.5,514.9 435.5,514.9 436.5,514.9 437.5,521 438.5,514.9 439.5,508.7 440.5,514.9 441.5,521 442.5,521 443.5,527.1 444.5,514.9 445.5,514.9 446.5,521 447.5,521 448.5,521 449.5,533.2 450.5,533.2 451.5,533.2 452.5,539.3 453.5,545.5 454.5,551.6 455.5,545.5 456.5,533.2 457.5,545.5 458.5,551.6 459.5,563.8 460.5,576.1 461.5,588.3 462.5,582.2 463.5,569.9 464.5,563.8 465.5,563.8 466.5,563.8 467.5,563.8 468.5,557.7 469.5,551.6 470.5,557.7 471.5,551.6 472.5,551.6 473.5,557.7 474.5,551.6 475.5,551.6 476.5,551.6 477.5,551.6 478.5,557.7 479.5,551.6 480.5,545.5 481.5,545.5 482.5,557.7 483.5,557.7 484.5,582.2 485.5,606.7 486.5,618.9 487.5,618.9 488.5,612.8 489.5,600.5 490.5,588.3 491.5,569.9 492.5,557.7 493.5,551.6 494.5,557.7 495.5,545.5 496.5,545.5 497.5,545.5 498.5,551.6 499.5,551.6 500.5,557.7 501.5,551.6 502.5,557.7 503.5,563.8 504.5,563.8 505.5,563.8 506.5,557.7 507.5,563.8 508.5,563.8 509.5,563.8 510.5,576.1 511.5,569.9 512.5,582.2 513.5,563.8 514.5,557.7 515.5,545.5 516.5,539.3 517.5,545.5 518.5,539.3 519.5,551.6 520.5,569.9 521.5,582.2 522.5,582.2 523.5,588.3 524.5,588.3 525.5,588.3 526.5,606.7 527.5,631.1 528.5,631.1 529.5,625 530.5,631.1 531.5,625 532.5,631.1 533.5,637.3 534.5,643.4 535.5,655.6 536.5,661.7 537.5,667.9 538.5,667.9 539.5,661.7 540.5,667.9 541.5,667.9 542.5,661.7 543.5,667.9 544.5,655.6 545.5,655.6 546.5,667.9 547.5,674 548.5,680.1 549.5,686.2 550.5,692.3 551.5,698.5 552.5,704.6 553.5,710.7 554.5,716.8 555.5,722.9 556.5,722.9 557.5,716.8 558.5,716.8 559.5,710.7 560.5,698.5 561.5,698.5 562.5,692.3 563.5,698.5 564.5,680.1 565.5,649.5 566.5,649.5 567.5,649.5 568.5,643.4 569.5,649.5 570.5,643.4 571.5,643.4 572.5,655.6 573.5,655.6 574.5,667.9 575.5,667.9 576.5,667.9 577.5,716.8 578.5,741.3 579.5,753.5 580.5,747.4 581.5,753.5 582.5,753.5 583.5,765.8 584.5,759.7 585.5,759.7 586.5,747.4 587.5,741.3 588.5,729.1 589.5,722.9 590.5,710.7 591.5,698.5 592.5,698.5 593.5,686.2 594.5,692.3 595.5,686.2 596.5,680.1 597.5,667.9 598.5,661.7 599.5,661.7 600.5,661.7 601.5,674 602.5,661.7 603.5,649.5 604.5,649.5 605.5,661.7 606.5,686.2 607.5,698.5 608.5,692.3 609.5,704.6 610.5,710.7 611.5,710.7 612.5,704.6 613.5,698.5 614.5,680.1 615.5,692.3 616.5,692.3 617.5,710.7 618.5,729.1 619.5,741.3 620.5,741.3 621.5,747.4 622.5,753.5 623.5,765.8 624.5,765.8 625.5,765.8 626.5,778 627.5,778 628.5,771.9 629.5,771.9 630.5,765.8 631.5,765.8 632.5,765.8 633.5,753.5 634.5,759.7 635.5,759.7 636.5,747.4 637.5,747.4 638.5,747.4 639.5,735.2 640.5,747.4 641.5,747.4 642.5,741.3 643.5,741.3 644.5,722.9 645.5,722.9 646.5,729.1 647.5,729.1 648.5,722.9 649.5,722.9 650.5,716.8 651.5,722.9 652.5,722.9 653.5,722.9 654.5,735.2 655.5,735.2 656.5,735.2 657.5,741.3 658.5,741.3 659.5,759.7 660.5,784.1 661.5,790.3 662.5,784.1 663.5,778 664.5,784.1 665.5,784.1 666.5,790.3 667.5,790.3 668.5,784.1 669.5,784.1 670.5,771.9 671.5,765.8 672.5,759.7 673.5,759.7 674.5,759.7 675.5,765.8 676.5,759.7 677.5,759.7 678.5,765.8 679.5,771.9 680.5,778 681.5,784.1 682.5,784.1 683.3,784.6 714.5,784.6" fill="none" stroke="#f85858" stroke-width="1" /><polyline points="330.5,667.9 331.5,674 332.5,680.1 333.5,680.1 334.5,680.1 335.5,680.1 336.5,674 337.5,667.9 338.5,674 339.5,674 340.5,674 341.5,674 342.5,661.7 343.5,661.7 344.5,667.9 345.5,661.7 346.5,661.7 347.5,655.6 348.5,661.7 349.5,661.7 350.5,661.7 351.5,649.5 352.5,661.7 353.5,655.6 354.5,661.7 355.5,661.7 356.5,655.6 357.5,649.5 358.5,649.5 359.5,649.5 360.5,655.6 361.5,655.6 362.5,661.7 363.5,661.7 364.5,661.7 365.5,661.7 366.5,667.9 367.5,667.9 368.5,674 369.5,667.9 370.5,674 371.5,674 372.5,680.1 373.5,680.1 374.5,680.1 375.5,686.2 376.5,674 377.5,680.1 378.5,674 379.5,674 380.5,667.9 381.5,680.1 382.5,667.9 383.5,674 384.5,680.1 385.5,674 386.5,674 387.5,674 388.5,661.7 389.5,674 390.5,661.7 391.5,661.7 392.5,649.5 393.5,643.4 394.5,637.3 395.5,637.3 396.5,643.4 397.5,649.5 398.5,637.3 399.5,637.3 400.5,631.1 401.5,631.1 402.5,625 403.5,618.9 404.5,606.7 405.5,600.5 406.5,582.2 407.5,582.2 408.5,582.2 409.5,582.2 410.5,582.2 411.5,582.2 412.5,594.4 413.5,600.5 414.5,612.8 415.5,612.8 416.5,631.1 417.5,643.4 418.5,637.3 419.5,655.6 420.5,649.5 421.5,655.6 422.5,649.5 423.5,649.5 424.5,643.4 425.5,631.1 426.5,631.1 427.5,625 428.5,625 429.5,612.8 430.5,612.8 431.5,594.4 432.5,594.4 433.5,594.4 434.5,600.5 435.5,606.7 436.5,600.5 437.5,612.8 438.5,606.7 439.5,600.5 440.5,606.7 441.5,606.7 442.5,606.7 443.5,612.8 444.5,600.5 445.5,600.5 446.5,606.7 447.5,606.7 448.5,606.7 449.5,612.8 450.5,618.9 451.5,618.9 452.5,618.9 453.5,625 454.5,631.1 455.5,625 456.5,612.8 457.5,618.9 458.5,631.1 459.5,637.3 460.5,649.5 461.5,655.6 462.5,649.5 463.5,637.3 464.5,631.1 465.5,631.1 466.5,631.1 467.5,631.1 468.5,631.1 469.5,618.9 470.5,631.1 471.5,625 472.5,625 473.5,625 474.5,618.9 475.5,625 476.5,618.9 477.5,618.9 478.5,625 479.5,618.9 480.5,612.8 481.5,612.8 482.5,625 483.5,625 484.5,643.4 485.5,667.9 486.5,680.1 487.5,698.5 488.5,710.7 489.5,698.5 490.5,692.3 491.5,674 492.5,667.9 493.5,649.5 494.5,655.6 495.5,643.4 496.5,643.4 497.5,643.4 498.5,655.6 499.5,649.5 500.5,661.7 501.5,655.6 502.5,655.6 503.5,661.7 504.5,661.7 505.5,661.7 506.5,649.5 507.5,655.6 508.5,655.6 509.5,655.6 510.5,661.7 511.5,649.5 512.5,661.7 513.5,643.4 514.5,631.1 515.5,618.9 516.5,612.8 517.5,618.9 518.5,612.8 519.5,618.9 520.5,643.4 521.5,655.6 522.5,661.7 523.5,674 524.5,686.2 525.5,704.6 526.5,716.8 527.5,735.2 528.5,735.2 529.5,722.9 530.5,729.1 531.5,716.8 532.5,722.9 533.5,722.9 534.5,735.2 535.5,747.4 536.5,753.5 537.5,759.7 538.5,759.7 539.5,747.4 540.5,747.4 541.5,747.4 542.5,747.4 543.5,753.5 544.5,735.2 545.5,735.2 546.5,741.3 547.5,753.5 548.5,759.7 549.5,759.7 550.5,765.8 551.5,771.9 552.5,778 553.5,784.1 554.5,790.3 555.5,796.4 556.5,796.4 557.5,790.3 558.5,784.1 559.5,778 560.5,771.9 561.5,765.8 562.5,753.5 563.5,753.5 564.5,747.4 565.5,747.4 566.5,747.4 567.5,747.4 568.5,741.3 569.5,741.3 570.5,729.1 571.5,729.1 572.5,729.1 573.5,722.9 574.5,741.3 575.5,753.5 576.5,765.8 577.5,784.1 578.5,808.6 579.5,827 580.5,820.9 581.5,839.2 582.5,839.2 583.5,857.6 584.5,851.5 585.5,857.6 586.5,845.3 587.5,839.2 588.5,827 589.5,820.9 590.5,808.6 591.5,796.4 592.5,796.4 593.5,778 594.5,784.1 595.5,784.1 596.5,784.1 597.5,765.8 598.5,759.7 599.5,759.7 600.5,753.5 601.5,759.7 602.5,753.5 603.5,741.3 604.5,741.3 605.5,747.4 606.5,765.8 607.5,778 608.5,778 609.5,790.3 610.5,802.5 611.5,802.5 612.5,790.3 613.5,784.1 614.5,765.8 615.5,778 616.5,771.9 617.5,784.1 618.5,796.4 619.5,814.7 620.5,808.6 621.5,820.9 622.5,827 623.5,833.1 624.5,833.1 625.5,833.1 626.5,839.2 627.5,845.3 628.5,839.2 629.5,839.2 630.5,833.1 631.5,833.1 632.5,833.1 633.5,827 634.5,833.1 635.5,827 636.5,814.7 637.5,820.9 638.5,814.7 639.5,808.6 640.5,814.7 641.5,814.7 642.5,808.6 643.5,808.6 644.5,790.3 645.5,790.3 646.5,796.4 647.5,796.4 648.5,790.3 649.5,790.3 650.5,784.1 651.5,790.3 652.5,790.3 653.5,790.3 654.5,802.5 655.5,802.5 656.5,802.5 657.5,808.6 658.5,808.6 659.5,827 660.5,851.5 661.5,857.6 662.5,863.7 663.5,857.6 664.5,863.7 665.5,863.7 666.5,869.8 667.5,863.7 668.5,851.5 669.5,851.5 670.5,839.2 671.5,833.1 672.5,827 673.5,827 674.5,827 675.5,833.1 676.5,827 677.5,827 678.5,833.1 679.5,839.2 680.5,845.3 681.5,851.5 682.5,851.5 683.3,851.5 714.5,851.5" fill="none" stroke="#0a64f4" stroke-width="1" /></g><path d="M330.5 435.5H714.5V894.5H330.5z" stroke="#000" stroke-width="1" fill="none"/><path d="M715 496.5h4M715 557.5h4M715 619.5h4M715 680.5h4M715 741.5h4M715 802.5h4M715 863.5h4M331.5 895v2.5M363.5 895v2.5M395.5 895v2.5M427.5 895v2.5M459.5 895v2.5M491.5 895v2.5M523.5 895v2.5M555.5 895v2.5M587.5 895v2.5M619.5 895v2.5M651.5 895v2.5M683.5 895v2.5" stroke="#000" stroke-width="1"/><rect x="716" y="776" width="62" height="17" fill="#ff6060"/><rect x="716" y="843" width="62" height="17" fill="#0b62f0"/><g shape-rendering="auto"><text x="721.6" y="502" fill="#000" font-size="14.2" textLength="51.3" lengthAdjust="spacingAndGlyphs" xml:space="preserve">1.35665</text><text x="721.6" y="563" fill="#000" font-size="14.2" textLength="51.3" lengthAdjust="spacingAndGlyphs" xml:space="preserve">1.35655</text><text x="721.6" y="624.6" fill="#000" font-size="14.2" textLength="51.3" lengthAdjust="spacingAndGlyphs" xml:space="preserve">1.35645</text><text x="721.6" y="686" fill="#000" font-size="14.2" textLength="51.3" lengthAdjust="spacingAndGlyphs" xml:space="preserve">1.35635</text><text x="721.6" y="747" fill="#000" font-size="14.2" textLength="51.3" lengthAdjust="spacingAndGlyphs" xml:space="preserve">1.35625</text><text x="721.6" y="808" fill="#000" font-size="14.2" textLength="51.3" lengthAdjust="spacingAndGlyphs" xml:space="preserve">1.35615</text><text x="721.6" y="869" fill="#000" font-size="14.2" textLength="51.3" lengthAdjust="spacingAndGlyphs" xml:space="preserve">1.35605</text><rect x="716" y="843" width="62" height="17" fill="#0b62f0"/><text x="721.6" y="789.6" fill="#fff" font-size="14.2" textLength="51.3" lengthAdjust="spacingAndGlyphs" xml:space="preserve">1.35618</text><text x="721.6" y="856.6" fill="#fff" font-size="14.2" textLength="51.4" lengthAdjust="spacingAndGlyphs" xml:space="preserve">1.35607</text><text x="332.9" y="451" fill="#000" font-size="14" textLength="52.2" lengthAdjust="spacingAndGlyphs" xml:space="preserve">GBPUSD</text><text x="331.4" y="912.2" fill="#000" font-size="14.2" textLength="71.5" lengthAdjust="spacingAndGlyphs" xml:space="preserve">2025.07.24</text><text x="427" y="912.2" fill="#000" font-size="14.2" textLength="37.2" lengthAdjust="spacingAndGlyphs" xml:space="preserve">10:29</text><text x="491.2" y="912.2" fill="#000" font-size="14.2" textLength="36.6" lengthAdjust="spacingAndGlyphs" xml:space="preserve">10:30</text><text x="555.2" y="912.2" fill="#000" font-size="14.2" textLength="36.6" lengthAdjust="spacingAndGlyphs" xml:space="preserve">10:30</text><text x="619" y="912.2" fill="#000" font-size="14.2" textLength="36.8" lengthAdjust="spacingAndGlyphs" xml:space="preserve">10:31</text><text x="683.2" y="912.2" fill="#000" font-size="14.2" textLength="57.9" lengthAdjust="spacingAndGlyphs" xml:space="preserve">10:32:02</text></g></svg><span class="t" style="left:885.66px;top:437.00px;font-size:16.90px;line-height:16.90px;color:#000;transform:scaleX(0.9699);">Symbol:</span><div class="abs" style="left:956px;top:431.4px;width:484px;height:26.2px;border:1px solid #7e7e7e;border-radius:3px;background:#fff"></div><svg class="chart" style="left:1418.6px;top:438.8px" width="16" height="12" viewBox="-8 -6 16 12"><path d="M-5.2 -2.6L0 2.6L5.2 -2.6" stroke="#404040" stroke-width="1.15" fill="none"/></svg><span class="t" style="left:963.23px;top:437.00px;font-size:16.90px;line-height:16.90px;color:#000;transform:scaleX(0.9128);">GBPUSD, Great Britain Pound vs US Dollar</span><span class="t" style="left:904.23px;top:478.00px;font-size:16.90px;line-height:16.90px;color:#000;transform:scaleX(0.9843);">Type:</span><div class="abs" style="left:956px;top:474.6px;width:484px;height:26.2px;border:1px solid #c2c2c2;border-radius:3px;background:#fcfcfc"></div><svg class="chart" style="left:1418.6px;top:482.00000000000006px" width="16" height="12" viewBox="-8 -6 16 12"><path d="M-5.2 -2.6L0 2.6L5.2 -2.6" stroke="#404040" stroke-width="1.15" fill="none"/></svg><span class="t" style="left:959.52px;top:481.00px;font-size:16.90px;line-height:16.90px;color:#000;transform:scaleX(0.9211);">Market Execution</span><span class="t" style="left:885.92px;top:548.00px;font-size:16.90px;line-height:16.90px;color:#000;transform:scaleX(0.9656);">Volume:</span><div class="abs" style="left:957.6px;top:543.2px;width:118.6px;height:28.4px;border:1px solid #e2e2e2;border-bottom:1.4px solid #868686;border-radius:3px;background:#fff"></div><span class="t" style="left:1037.94px;top:548.00px;font-size:16.90px;line-height:16.90px;color:#000;transform:scaleX(0.9822);">0.00</span><div class="abs" style="left:1078.4px;top:543.6px;width:23.4px;height:12.8px;border:1px solid #d4d4d4;border-radius:2px;background:#fdfdfd"></div><svg class="chart" style="left:1078.4px;top:543.6px" width="24" height="13" viewBox="1078.4 543.6 24 13"><path d="M1085.6000000000001 552.6h9l-4.5-5.2z" fill="#1a1a1a"/></svg><div class="abs" style="left:1078.4px;top:557.8000000000001px;width:23.4px;height:12.8px;border:1px solid #d4d4d4;border-radius:2px;background:#fdfdfd"></div><svg class="chart" style="left:1078.4px;top:557.8000000000001px" width="24" height="13" viewBox="1078.4 557.8000000000001 24 13"><path d="M1085.6000000000001 561.6h9l-4.5 5.2z" fill="#1a1a1a"/></svg><span class="t" style="left:1114.23px;top:551.00px;font-size:16.90px;line-height:16.90px;color:#000;transform:scaleX(0.8497);">0 GBP</span><span class="t" style="left:873.89px;top:589.00px;font-size:16.90px;line-height:16.90px;color:#000;transform:scaleX(0.9282);">Stop Loss:</span><div class="abs" style="left:957.6px;top:583.4px;width:118.6px;height:28.4px;border:1px solid #e2e2e2;border-bottom:1.4px solid #868686;border-radius:3px;background:#fff"></div><span class="t" style="left:1011.55px;top:589.00px;font-size:16.90px;line-height:16.90px;color:#000;transform:scaleX(0.9608);">0.00000</span><div class="abs" style="left:1078.4px;top:583.8px;width:23.4px;height:12.8px;border:1px solid #d4d4d4;border-radius:2px;background:#fdfdfd"></div><svg class="chart" style="left:1078.4px;top:583.8px" width="24" height="13" viewBox="1078.4 583.8 24 13"><path d="M1085.6000000000001 592.8h9l-4.5-5.2z" fill="#1a1a1a"/></svg><div class="abs" style="left:1078.4px;top:598.0px;width:23.4px;height:12.8px;border:1px solid #d4d4d4;border-radius:2px;background:#fdfdfd"></div><svg class="chart" style="left:1078.4px;top:598.0px" width="24" height="13" viewBox="1078.4 598.0 24 13"><path d="M1085.6000000000001 601.8h9l-4.5 5.2z" fill="#1a1a1a"/></svg><span class="t" style="left:1200.03px;top:589.00px;font-size:16.90px;line-height:16.90px;color:#000;transform:scaleX(0.9826);">Take Profit:</span><div class="abs" style="left:1294.8px;top:583.4px;width:118.4px;height:28.4px;border:1px solid #e2e2e2;border-bottom:1.4px solid #868686;border-radius:3px;background:#fff"></div><span class="t" style="left:1348.15px;top:589.00px;font-size:16.90px;line-height:16.90px;color:#000;transform:scaleX(0.9608);">0.00000</span><div class="abs" style="left:1415.4px;top:583.8px;width:23.4px;height:12.8px;border:1px solid #d4d4d4;border-radius:2px;background:#fdfdfd"></div><svg class="chart" style="left:1415.4px;top:583.8px" width="24" height="13" viewBox="1415.4 583.8 24 13"><path d="M1422.6000000000001 592.8h9l-4.5-5.2z" fill="#1a1a1a"/></svg><div class="abs" style="left:1415.4px;top:598.0px;width:23.4px;height:12.8px;border:1px solid #d4d4d4;border-radius:2px;background:#fdfdfd"></div><svg class="chart" style="left:1415.4px;top:598.0px" width="24" height="13" viewBox="1415.4 598.0 24 13"><path d="M1422.6000000000001 601.8h9l-4.5 5.2z" fill="#1a1a1a"/></svg><span class="t" style="left:875.03px;top:630.00px;font-size:16.90px;line-height:16.90px;color:#000;transform:scaleX(0.9849);">Fill policy:</span><div class="abs" style="left:957.4px;top:624.2px;width:483.2px;height:26.6px;border:1px solid #e4e4e4;border-radius:3px;background:#f8f8f8"></div><svg class="chart" style="left:1419.1999999999998px;top:631.8px" width="16" height="12" viewBox="-8 -6 16 12"><path d="M-5.2 -2.6L0 2.6L5.2 -2.6" stroke="#b8b8b8" stroke-width="1.15" fill="none"/></svg><span class="t" style="left:960.12px;top:631.00px;font-size:16.90px;line-height:16.90px;color:#858585;transform:scaleX(0.9475);">Immediate or Cancel</span><span class="t" style="left:869.99px;top:670.00px;font-size:16.90px;line-height:16.90px;color:#000;transform:scaleX(0.9605);">Comment:</span><div class="abs" style="left:957.4px;top:664.4px;width:483.2px;height:28.2px;border:1px solid #e2e2e2;border-bottom:1.4px solid #868686;border-radius:3px;background:#fff"></div><span class="t" style="left:974.13px;top:733.00px;font-size:39.00px;line-height:39.00px;color:#000;transform:scaleX(0.9804);">1.3560</span><span class="t" style="left:1093.46px;top:742.00px;font-size:28.40px;line-height:28.40px;color:#000;transform:scaleX(1.0834);">7</span><span class="t" style="left:1125.00px;top:731.00px;font-size:46.00px;line-height:46.00px;color:#000;transform:scaleX(1.0341);">/</span><span class="t" style="left:1150.74px;top:733.00px;font-size:39.00px;line-height:39.00px;color:#000;transform:scaleX(0.9785);">1.3561</span><span class="t" style="left:1269.66px;top:742.00px;font-size:28.40px;line-height:28.40px;color:#000;transform:scaleX(1.1088);">8</span><div class="abs" style="left:823px;top:817px;width:291.4px;height:31px;border:1px solid #a6a6a6;border-radius:2.5px;background:#f0f0f0"></div><span class="t" style="left:918.90px;top:826.00px;font-size:16.90px;line-height:16.90px;color:#7c7c7c;transform:scaleX(0.9268);">Sell by Market</span><div class="abs" style="left:1149px;top:817px;width:291.4px;height:31px;border:1px solid #a6a6a6;border-radius:2.5px;background:#f0f0f0"></div><span class="t" style="left:1242.70px;top:826.00px;font-size:16.90px;line-height:16.90px;color:#7c7c7c;transform:scaleX(0.9355);">Buy by Market</span><div class="abs" style="left:823px;top:862.2px;width:617.4px;height:31px;border:1px solid #a6a6a6;border-radius:2.5px;background:#f0f0f0"></div></section><div class="hl" style="left:242px;top:24.4px;width:241.4px;height:108.2px"></div><div class="hl" style="left:860px;top:409.2px;width:609.6px;height:118.8px"></div></div></body></html>
